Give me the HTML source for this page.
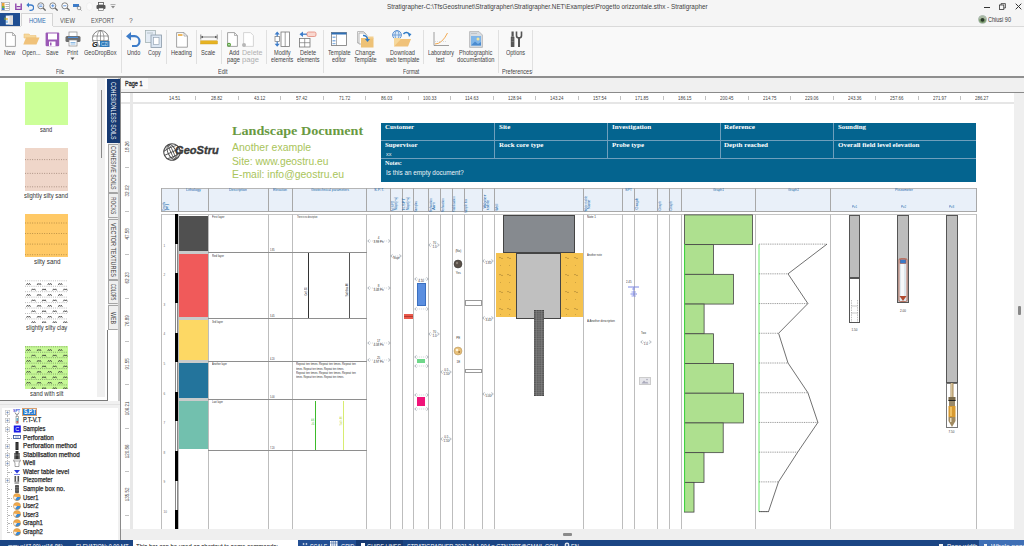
<!DOCTYPE html>
<html><head><meta charset="utf-8">
<style>
*{box-sizing:border-box;margin:0;padding:0}
html,body{width:1024px;height:546px;overflow:hidden;background:#f3f3f3;font-family:"Liberation Sans",sans-serif;color:#333}
.a{position:absolute;display:block}
.t{position:absolute;white-space:nowrap;line-height:1}
</style></head><body>
<div class="a" style="left:0;top:0;width:1024px;height:546px;overflow:hidden">
<div class="a" style="left:0.00px;top:0.00px;width:1024.00px;height:13.00px;background:#f5f5f5;"></div>
<div class="t" style="left:386.90px;top:2.81px;font-size:7.2px;color:#404040;font-family:'Liberation Sans',sans-serif;transform:scaleX(0.8798);transform-origin:0 0;">Stratigrapher-C:\TfsGeostrunet\Stratigrapher\Stratigrapher.NET\Examples\Progetto orizzontale.sthx - Stratigrapher</div>
<svg class="a" style="left:1px;top:2px;" width="9" height="9" viewBox="0 0 9 9"><rect x="0.5" y="0.5" width="8" height="8" fill="#fff" stroke="#999" stroke-width="0.6"/><rect x="1" y="1" width="2.5" height="7" fill="#e8a33b"/><rect x="1" y="4" width="2.5" height="2" fill="#6ab04c"/><rect x="1" y="6" width="2.5" height="2" fill="#3b7dd8"/><line x1="4.5" y1="2.5" x2="8" y2="2.5" stroke="#888" stroke-width="0.6"/><line x1="4.5" y1="4.5" x2="8" y2="4.5" stroke="#888" stroke-width="0.6"/><line x1="4.5" y1="6.5" x2="8" y2="6.5" stroke="#888" stroke-width="0.6"/></svg>
<svg class="a" style="left:15px;top:3px;" width="7" height="7" viewBox="0 0 7 7"><path d="M0.8 0.5 V6.5 H6.2 V0.5" fill="none" stroke="#8e44ad" stroke-width="1.4"/><rect x="1.5" y="3" width="4" height="1.2" fill="#8e44ad"/></svg>
<svg class="a" style="left:26px;top:2px;" width="8" height="9" viewBox="0 0 8 9"><path d="M2 3 H5 A2.6 2.6 0 0 1 5 8.3 H3.5" fill="none" stroke="#3d7cc9" stroke-width="1.3"/><path d="M0.3 3 L3 0.6 V5.4 Z" fill="#3d7cc9"/></svg>
<svg class="a" style="left:37px;top:2px;" width="9" height="9" viewBox="0 0 9 9"><circle cx="3.8" cy="3.8" r="3" fill="#fff" stroke="#777" stroke-width="0.9"/><line x1="6" y1="6" x2="8.6" y2="8.6" stroke="#666" stroke-width="1.3"/><line x1="2.2" y1="3" x2="5.4" y2="3" stroke="#3b7dd8" stroke-width="0.7"/><line x1="2.2" y1="4.6" x2="5.4" y2="4.6" stroke="#3b7dd8" stroke-width="0.7"/></svg>
<svg class="a" style="left:49px;top:2px;" width="9" height="9" viewBox="0 0 9 9"><circle cx="3.8" cy="3.8" r="3" fill="#fff" stroke="#777" stroke-width="0.9"/><line x1="6" y1="6" x2="8.6" y2="8.6" stroke="#666" stroke-width="1.3"/><line x1="2.2" y1="3.8" x2="5.4" y2="3.8" stroke="#3b7dd8" stroke-width="0.8"/><line x1="3.8" y1="2.2" x2="3.8" y2="5.4" stroke="#3b7dd8" stroke-width="0.8"/></svg>
<svg class="a" style="left:61px;top:2px;" width="9" height="9" viewBox="0 0 9 9"><circle cx="3.8" cy="3.8" r="3" fill="#fff" stroke="#777" stroke-width="0.9"/><line x1="6" y1="6" x2="8.6" y2="8.6" stroke="#666" stroke-width="1.3"/><line x1="2.2" y1="3.8" x2="5.4" y2="3.8" stroke="#3b7dd8" stroke-width="0.8"/></svg>
<svg class="a" style="left:73px;top:3px;" width="9" height="8" viewBox="0 0 9 8"><rect x="0" y="1" width="6" height="3" fill="#3d7cc9"/><circle cx="6" cy="5" r="1.8" fill="none" stroke="#777" stroke-width="0.7"/><line x1="7.2" y1="6.2" x2="8.5" y2="7.5" stroke="#777" stroke-width="0.8"/></svg>
<svg class="a" style="left:86px;top:2px;" width="7" height="9" viewBox="0 0 7 9"><ellipse cx="3.5" cy="4.5" rx="3" ry="3.8" fill="#fafafa" stroke="#e6e6e6" stroke-width="0.5"/></svg>
<svg class="a" style="left:96px;top:2px;" width="10" height="9" viewBox="0 0 10 9"><rect x="2.5" y="0.5" width="5" height="2.5" fill="#fff" stroke="#555" stroke-width="0.8"/><rect x="0.5" y="3" width="9" height="4" rx="1" fill="#555"/><rect x="2.5" y="6" width="5" height="2.5" fill="#fff" stroke="#555" stroke-width="0.6"/></svg>
<svg class="a" style="left:110px;top:4px;" width="6" height="5" viewBox="0 0 6 5"><line x1="0.5" y1="0.6" x2="5.5" y2="0.6" stroke="#888" stroke-width="0.7"/><path d="M1 2 L5 2 L3 4.5 Z" fill="#888"/></svg>
<div class="a" style="left:984.25px;top:6.60px;width:5.25px;height:0.90px;background:#333;"></div>
<svg class="a" style="left:999px;top:3px;" width="7" height="7" viewBox="0 0 7 7"><rect x="0.5" y="2" width="4.3" height="4.5" fill="none" stroke="#333" stroke-width="0.8"/><path d="M2 2 V0.6 H6.4 V5 H4.8" fill="none" stroke="#333" stroke-width="0.8"/></svg>
<svg class="a" style="left:1015px;top:3px;" width="7" height="7" viewBox="0 0 7 7"><path d="M0.7 0.7 L6.3 6.3 M6.3 0.7 L0.7 6.3" stroke="#333" stroke-width="1"/></svg>
<div class="a" style="left:0.00px;top:13.00px;width:1024.00px;height:13.00px;background:#f5f5f5;"></div>
<div class="a" style="left:0.00px;top:13.10px;width:20.00px;height:13.40px;background:#1f4e91;"></div>
<svg class="a" style="left:4px;top:15px;" width="10" height="10" viewBox="0 0 10 10"><rect x="1.8" y="0.6" width="7.2" height="9" fill="#f4f4f4"/><rect x="5.5" y="0.6" width="3.5" height="9" fill="#dcdcdc"/><rect x="0.4" y="2.5" width="1.4" height="2.5" fill="#7aa04a"/><rect x="2.3" y="3" width="1.3" height="2" fill="#f0b030"/><rect x="2.3" y="5.5" width="1.3" height="2.5" fill="#6ab0e8"/></svg>
<div class="a" style="left:20.6px;top:13.1px;width:32px;height:14px;background:#f9f9f9;border:1px solid #d4d4d4;border-bottom:none"></div>
<div class="t" style="left:28.50px;top:16.57px;font-size:7.3px;color:#2e6eb2;font-family:'Liberation Sans',sans-serif;transform:scaleX(0.7648);transform-origin:0 0;">HOME</div>
<div class="t" style="left:60.25px;top:16.57px;font-size:7.3px;color:#555;font-family:'Liberation Sans',sans-serif;transform:scaleX(0.8040);transform-origin:0 0;">VIEW</div>
<div class="t" style="left:90.60px;top:16.57px;font-size:7.3px;color:#555;font-family:'Liberation Sans',sans-serif;transform:scaleX(0.7746);transform-origin:0 0;">EXPORT</div>
<div class="t" style="left:128.75px;top:16.57px;font-size:7.3px;color:#555;font-family:'Liberation Sans',sans-serif;transform:scaleX(0.9236);transform-origin:0 0;">?</div>
<svg class="a" style="left:978px;top:15px;" width="9" height="9" viewBox="0 0 9 9"><circle cx="4.5" cy="4.5" r="4" fill="#7a9a6a"/><path d="M0.5 4.5 A4 4 0 0 1 8.5 4.5 Z" fill="#a8b8a0"/><circle cx="4.5" cy="4.8" r="1.9" fill="#2b3a2a"/><circle cx="4.5" cy="4.5" r="4" fill="none" stroke="#b8c4c8" stroke-width="0.6"/></svg>
<div class="t" style="left:988.00px;top:15.67px;font-size:7.0px;color:#333;font-family:'Liberation Sans',sans-serif;transform:scaleX(0.7881);transform-origin:0 0;">Chiusi 90</div>
<div class="a" style="left:0.00px;top:26.00px;width:1024.00px;height:50.00px;background:#f9f9f9;"></div>
<div class="a" style="left:52.50px;top:26.00px;width:971.50px;height:1.00px;background:#dadada;"></div>
<div class="a" style="left:0.00px;top:26.00px;width:20.60px;height:1.00px;background:#dadada;"></div>
<div class="a" style="left:0.00px;top:76.00px;width:1024.00px;height:2.00px;background:#8f8f8f;"></div>
<div class="a" style="left:120.90px;top:29.50px;width:1.00px;height:43.50px;background:#e0e0e0;"></div>
<div class="a" style="left:166.20px;top:29.50px;width:1.00px;height:34.50px;background:#e0e0e0;"></div>
<div class="a" style="left:196.10px;top:29.50px;width:1.00px;height:34.50px;background:#e0e0e0;"></div>
<div class="a" style="left:221.10px;top:29.50px;width:1.00px;height:34.50px;background:#e0e0e0;"></div>
<div class="a" style="left:266.00px;top:29.50px;width:1.00px;height:34.50px;background:#e0e0e0;"></div>
<div class="a" style="left:322.90px;top:29.50px;width:1.00px;height:43.50px;background:#e0e0e0;"></div>
<div class="a" style="left:422.90px;top:29.50px;width:1.00px;height:34.50px;background:#e0e0e0;"></div>
<div class="a" style="left:498.25px;top:29.50px;width:1.00px;height:43.50px;background:#e0e0e0;"></div>
<div class="a" style="left:532.30px;top:29.50px;width:1.00px;height:43.50px;background:#e0e0e0;"></div>
<div class="t" style="left:4.40px;top:48.77px;font-size:7.0px;color:#444;font-family:'Liberation Sans',sans-serif;transform:scaleX(0.7998);transform-origin:0 0;">New</div>
<div class="t" style="left:21.90px;top:48.77px;font-size:7.0px;color:#444;font-family:'Liberation Sans',sans-serif;transform:scaleX(0.8145);transform-origin:0 0;">Open...</div>
<div class="t" style="left:45.60px;top:48.77px;font-size:7.0px;color:#444;font-family:'Liberation Sans',sans-serif;transform:scaleX(0.7834);transform-origin:0 0;">Save</div>
<div class="t" style="left:66.90px;top:48.77px;font-size:7.0px;color:#444;font-family:'Liberation Sans',sans-serif;transform:scaleX(0.7573);transform-origin:0 0;">Print</div>
<div class="t" style="left:84.40px;top:48.77px;font-size:7.0px;color:#444;font-family:'Liberation Sans',sans-serif;transform:scaleX(0.8031);transform-origin:0 0;">GeoDropBox</div>
<svg class="a" style="left:70px;top:57px;" width="5" height="4" viewBox="0 0 5 4"><path d="M0.5 0.5 L4.5 0.5 L2.5 3 Z" fill="#555"/></svg>
<div class="t" style="left:55.90px;top:68.27px;font-size:7.0px;color:#444;font-family:'Liberation Sans',sans-serif;transform:scaleX(0.7181);transform-origin:0 0;">File</div>
<div class="t" style="left:127.00px;top:48.77px;font-size:7.0px;color:#444;font-family:'Liberation Sans',sans-serif;transform:scaleX(0.7947);transform-origin:0 0;">Undo</div>
<div class="t" style="left:147.70px;top:48.77px;font-size:7.0px;color:#444;font-family:'Liberation Sans',sans-serif;transform:scaleX(0.7772);transform-origin:0 0;">Copy</div>
<div class="t" style="left:170.80px;top:48.77px;font-size:7.0px;color:#444;font-family:'Liberation Sans',sans-serif;transform:scaleX(0.8015);transform-origin:0 0;">Heading</div>
<div class="t" style="left:201.20px;top:48.77px;font-size:7.0px;color:#444;font-family:'Liberation Sans',sans-serif;transform:scaleX(0.8166);transform-origin:0 0;">Scale</div>
<div class="t" style="left:228.50px;top:48.77px;font-size:7.0px;color:#444;font-family:'Liberation Sans',sans-serif;transform:scaleX(0.8189);transform-origin:0 0;">Add</div>
<div class="t" style="left:227.00px;top:55.87px;font-size:7.0px;color:#444;font-family:'Liberation Sans',sans-serif;transform:scaleX(0.8348);transform-origin:0 0;">page</div>
<div class="t" style="left:241.50px;top:48.77px;font-size:7.0px;color:#b0b0b0;font-family:'Liberation Sans',sans-serif;transform:scaleX(1.0131);transform-origin:0 0;">Delete</div>
<div class="t" style="left:242.00px;top:55.87px;font-size:7.0px;color:#b0b0b0;font-family:'Liberation Sans',sans-serif;transform:scaleX(1.0916);transform-origin:0 0;">page</div>
<div class="t" style="left:217.80px;top:68.27px;font-size:7.0px;color:#444;font-family:'Liberation Sans',sans-serif;transform:scaleX(0.7876);transform-origin:0 0;">Edit</div>
<div class="t" style="left:273.50px;top:48.77px;font-size:7.0px;color:#444;font-family:'Liberation Sans',sans-serif;transform:scaleX(0.8003);transform-origin:0 0;">Modify</div>
<div class="t" style="left:271.00px;top:55.87px;font-size:7.0px;color:#444;font-family:'Liberation Sans',sans-serif;transform:scaleX(0.7816);transform-origin:0 0;">elements</div>
<div class="t" style="left:299.80px;top:48.77px;font-size:7.0px;color:#444;font-family:'Liberation Sans',sans-serif;transform:scaleX(0.7907);transform-origin:0 0;">Delete</div>
<div class="t" style="left:296.70px;top:55.87px;font-size:7.0px;color:#444;font-family:'Liberation Sans',sans-serif;transform:scaleX(0.7921);transform-origin:0 0;">elements</div>
<div class="t" style="left:327.70px;top:48.77px;font-size:7.0px;color:#444;font-family:'Liberation Sans',sans-serif;transform:scaleX(0.7957);transform-origin:0 0;">Template</div>
<div class="t" style="left:331.90px;top:55.87px;font-size:7.0px;color:#444;font-family:'Liberation Sans',sans-serif;transform:scaleX(0.7938);transform-origin:0 0;">editor</div>
<div class="t" style="left:355.10px;top:48.77px;font-size:7.0px;color:#444;font-family:'Liberation Sans',sans-serif;transform:scaleX(0.8115);transform-origin:0 0;">Change</div>
<div class="t" style="left:354.40px;top:55.87px;font-size:7.0px;color:#444;font-family:'Liberation Sans',sans-serif;transform:scaleX(0.7957);transform-origin:0 0;">Template</div>
<div class="t" style="left:389.70px;top:48.77px;font-size:7.0px;color:#444;font-family:'Liberation Sans',sans-serif;transform:scaleX(0.8030);transform-origin:0 0;">Download</div>
<div class="t" style="left:385.50px;top:55.87px;font-size:7.0px;color:#444;font-family:'Liberation Sans',sans-serif;transform:scaleX(0.8046);transform-origin:0 0;">web template</div>
<div class="t" style="left:403.10px;top:68.27px;font-size:7.0px;color:#444;font-family:'Liberation Sans',sans-serif;transform:scaleX(0.7352);transform-origin:0 0;">Format</div>
<div class="t" style="left:427.70px;top:48.77px;font-size:7.0px;color:#444;font-family:'Liberation Sans',sans-serif;transform:scaleX(0.7784);transform-origin:0 0;">Laboratory</div>
<div class="t" style="left:436.00px;top:55.87px;font-size:7.0px;color:#444;font-family:'Liberation Sans',sans-serif;transform:scaleX(0.7445);transform-origin:0 0;">test</div>
<div class="t" style="left:458.90px;top:48.77px;font-size:7.0px;color:#444;font-family:'Liberation Sans',sans-serif;transform:scaleX(0.8072);transform-origin:0 0;">Photographic</div>
<div class="t" style="left:457.30px;top:55.87px;font-size:7.0px;color:#444;font-family:'Liberation Sans',sans-serif;transform:scaleX(0.8166);transform-origin:0 0;">documentation</div>
<div class="t" style="left:506.25px;top:48.77px;font-size:7.0px;color:#444;font-family:'Liberation Sans',sans-serif;transform:scaleX(0.7897);transform-origin:0 0;">Options</div>
<div class="t" style="left:501.60px;top:68.27px;font-size:7.0px;color:#444;font-family:'Liberation Sans',sans-serif;transform:scaleX(0.7949);transform-origin:0 0;">Preferences</div>
<svg class="a" style="left:5px;top:32px;" width="11" height="15" viewBox="0 0 11 15"><path d="M0.6 0.6 H7.5 L10.4 3.5 V14.4 H0.6 Z" fill="#fff" stroke="#999" stroke-width="0.9"/><path d="M7.5 0.6 V3.5 H10.4" fill="none" stroke="#999" stroke-width="0.7"/></svg>
<svg class="a" style="left:23px;top:33px;" width="17" height="12" viewBox="0 0 17 12"><path d="M1 1 H6 L7.5 2.5 H13 V5 H1 Z" fill="#f6d89c" stroke="#efc27a" stroke-width="0.6"/><path d="M0.3 11.5 L3 4.5 H16.5 L13.5 11.5 Z" fill="#f0c27a"/></svg>
<svg class="a" style="left:45px;top:32px;" width="15" height="15" viewBox="0 0 15 15"><rect x="0.6" y="0.6" width="13.6" height="13.6" rx="1" fill="#9b59b6"/><rect x="3" y="1.5" width="9" height="6" fill="#fff"/><rect x="4" y="9.5" width="6.5" height="4.7" fill="#fff"/><rect x="5" y="10.5" width="1.5" height="3" fill="#9b59b6"/></svg>
<svg class="a" style="left:65px;top:31px;" width="16" height="16" viewBox="0 0 16 16"><rect x="4" y="1" width="8" height="5" fill="#fff" stroke="#888" stroke-width="0.7"/><rect x="0.5" y="5" width="15" height="6" rx="1.5" fill="#6d6d6d"/><rect x="3" y="5.8" width="10" height="1.2" fill="#4f8fd8"/><rect x="4" y="9" width="8" height="6" fill="#fff" stroke="#888" stroke-width="0.7"/><line x1="5.5" y1="11.5" x2="10.5" y2="11.5" stroke="#5b9bd5" stroke-width="0.7"/><line x1="5.5" y1="13" x2="10.5" y2="13" stroke="#5b9bd5" stroke-width="0.7"/></svg>
<svg class="a" style="left:91px;top:30px;" width="19" height="18" viewBox="0 0 19 18"><circle cx="9.5" cy="8.5" r="8" fill="#fff" stroke="#666" stroke-width="0.8"/><ellipse cx="9.5" cy="8.5" rx="3.5" ry="8" fill="none" stroke="#666" stroke-width="0.6"/><line x1="1.5" y1="6" x2="17.5" y2="6" stroke="#666" stroke-width="0.6"/><line x1="1.5" y1="10.5" x2="17.5" y2="10.5" stroke="#666" stroke-width="0.6"/><line x1="9.5" y1="0.5" x2="9.5" y2="16.5" stroke="#666" stroke-width="0.6"/><rect x="9" y="11" width="9.5" height="6" fill="#2f79b9"/><text x="1" y="17.3" font-family="Liberation Sans" font-weight="700" font-style="italic" font-size="7.5" fill="#111">G</text><text x="10" y="16" font-family="Liberation Sans" font-size="4.5" fill="#cfe4f7">CZI</text></svg>
<svg class="a" style="left:126px;top:32px;" width="15" height="15" viewBox="0 0 15 15"><path d="M4 4.2 H8.5 A5 5 0 0 1 8.5 14.2 H6" fill="none" stroke="#3d7cc9" stroke-width="2.2"/><path d="M0 4.2 L5 0 V8.4 Z" fill="#3d7cc9"/></svg>
<svg class="a" style="left:145px;top:30px;" width="17" height="18" viewBox="0 0 17 18"><rect x="0.5" y="0.5" width="10" height="12" fill="#e4ecf5" stroke="#9aa" stroke-width="0.7"/><rect x="6" y="5" width="10.5" height="12.5" fill="#dbe6f2" stroke="#8a9aa8" stroke-width="0.8"/><rect x="8.5" y="7.5" width="5.5" height="7" fill="#fff" stroke="#8a9aa8" stroke-width="0.6"/><line x1="2" y1="3" x2="8" y2="3" stroke="#9aa" stroke-width="0.6"/></svg>
<svg class="a" style="left:176px;top:32px;" width="12" height="16" viewBox="0 0 12 16"><path d="M0.6 0.6 H8 L11.4 4 V15.2 H0.6 Z" fill="#fff" stroke="#999" stroke-width="0.9"/><path d="M8 0.6 V4 H11.4" fill="none" stroke="#999" stroke-width="0.7"/><rect x="2" y="2.2" width="4.5" height="1.6" fill="#eba83a"/></svg>
<svg class="a" style="left:200px;top:34px;" width="18" height="11" viewBox="0 0 18 11"><line x1="1" y1="3" x2="17" y2="3" stroke="#555" stroke-width="0.7"/><path d="M1 3 L3 1.8 V4.2 Z M17 3 L15 1.8 V4.2 Z" fill="#555"/><line x1="0.8" y1="0.5" x2="0.8" y2="5.5" stroke="#555" stroke-width="0.7"/><line x1="17.2" y1="0.5" x2="17.2" y2="5.5" stroke="#555" stroke-width="0.7"/><rect x="0.5" y="6.8" width="17" height="3.2" fill="#e6b323" stroke="#c9961a" stroke-width="0.4"/></svg>
<svg class="a" style="left:227px;top:32px;" width="14" height="16" viewBox="0 0 14 16"><path d="M0.6 0.6 H7.5 L10.4 3.5 V14.4 H0.6 Z" fill="#fff" stroke="#999" stroke-width="0.9"/><path d="M7.5 0.6 V3.5 H10.4" fill="none" stroke="#999" stroke-width="0.7"/><circle cx="2" cy="12.8" r="2" fill="#5aa03c"/><circle cx="2" cy="12.8" r="0.8" fill="#dfe"/></svg>
<svg class="a" style="left:241px;top:32px;" width="14" height="16" viewBox="0 0 14 16"><path d="M2.6 0.6 H9.5 L12.4 3.5 V14.4 H2.6 Z" fill="#fff" stroke="#d0d0d0" stroke-width="0.9"/><circle cx="3" cy="13" r="2" fill="#b7b7b7"/></svg>
<svg class="a" style="left:273px;top:31px;" width="17" height="17" viewBox="0 0 17 17"><rect x="8" y="1" width="8.4" height="14.5" fill="#fff" stroke="#777" stroke-width="0.8"/><line x1="12.2" y1="1" x2="12.2" y2="15.5" stroke="#777" stroke-width="0.7"/><rect x="2" y="5.5" width="4.5" height="5" fill="#fff" stroke="#777" stroke-width="0.7"/><path d="M4.2 0.5 L6.8 3.5 H1.6 Z M4.2 15.8 L6.8 12.8 H1.6 Z" fill="#3d7cc9"/><line x1="4.2" y1="3" x2="4.2" y2="5.5" stroke="#3d7cc9" stroke-width="1.2"/><line x1="4.2" y1="10.5" x2="4.2" y2="13" stroke="#3d7cc9" stroke-width="1.2"/></svg>
<svg class="a" style="left:299px;top:31px;" width="18" height="17" viewBox="0 0 18 17"><rect x="0.5" y="7.5" width="10.5" height="8.5" fill="#fff" stroke="#777" stroke-width="0.8"/><line x1="5.7" y1="7.5" x2="5.7" y2="16" stroke="#777" stroke-width="0.7"/><line x1="0.5" y1="11.7" x2="11" y2="11.7" stroke="#777" stroke-width="0.7"/><path d="M0.5 3.2 L4 0.5 V6 Z" fill="#3d7cc9"/><line x1="3.5" y1="3.2" x2="8" y2="3.2" stroke="#3d7cc9" stroke-width="1.3"/><rect x="8" y="1" width="9" height="4.5" rx="1.5" fill="#f9d8d0" stroke="#e07a6a" stroke-width="0.7"/></svg>
<svg class="a" style="left:331px;top:32px;" width="16" height="14" viewBox="0 0 16 14"><rect x="0.5" y="0.5" width="15" height="13" fill="#fff" stroke="#777" stroke-width="0.8"/><rect x="0.5" y="0.5" width="15" height="2" fill="#2f6fb5"/><line x1="5.5" y1="2.5" x2="5.5" y2="13.5" stroke="#777" stroke-width="0.6"/><rect x="1.5" y="4.5" width="3" height="1.5" fill="#8ab4e2"/><rect x="1.5" y="8" width="3" height="1.5" fill="#8ab4e2"/><rect x="1.5" y="11" width="3" height="1.2" fill="#8ab4e2"/></svg>
<svg class="a" style="left:357px;top:31px;" width="17" height="17" viewBox="0 0 17 17"><path d="M0.6 0.6 H6.5 L9 3 V12 H0.6 Z" fill="#fff" stroke="#999" stroke-width="0.7"/><path d="M2 2 H7.5 L10 4.5 V13 H2 Z" fill="#fff" stroke="#999" stroke-width="0.7"/><rect x="4" y="7" width="12.5" height="9.5" fill="#eec277"/><rect x="11" y="5.5" width="5.5" height="2" fill="#f3d08f"/><path d="M6 4.5 A4 4 0 0 1 10.5 8.5" fill="none" stroke="#2e7ac6" stroke-width="1.4"/><path d="M8 8 L13 8 L10.5 11 Z" fill="#2e7ac6"/></svg>
<svg class="a" style="left:392px;top:30px;" width="20" height="17" viewBox="0 0 20 17"><circle cx="5" cy="5" r="4.4" fill="#dce9f6" stroke="#3d7cc9" stroke-width="0.8"/><line x1="0.8" y1="5" x2="9.2" y2="5" stroke="#3d7cc9" stroke-width="0.6"/><ellipse cx="5" cy="5" rx="2" ry="4.4" fill="none" stroke="#3d7cc9" stroke-width="0.6"/><path d="M11.5 4 A3.5 3.5 0 0 1 17.5 4.5" fill="none" stroke="#2e7ac6" stroke-width="1.4"/><path d="M16 3 L19.5 4 L17 7 Z" fill="#2e7ac6"/><path d="M2 16.5 L5 9 H19 L16 16.5 Z" fill="#f0c27a"/><path d="M2 16.5 V8 H8 L9 9" fill="#f6d89c"/></svg>
<svg class="a" style="left:433px;top:32px;" width="16" height="15" viewBox="0 0 16 15"><line x1="1" y1="0" x2="1" y2="13.5" stroke="#888" stroke-width="0.8"/><line x1="1" y1="13.5" x2="16" y2="13.5" stroke="#888" stroke-width="0.8"/><path d="M2 12 Q 9 12 14.5 1" fill="none" stroke="#f0a040" stroke-width="0.9"/><line x1="2" y1="9.5" x2="13" y2="9.5" stroke="#bbb" stroke-width="0.5" stroke-dasharray="1,1"/></svg>
<svg class="a" style="left:469px;top:31px;" width="14" height="17" viewBox="0 0 14 17"><path d="M0.6 0.6 H10 L13.4 4 V16.4 H0.6 Z" fill="#d8dde3" stroke="#aaa" stroke-width="0.7"/><rect x="2" y="5" width="10" height="9.5" fill="#7fb5e8"/><circle cx="9" cy="8" r="1.5" fill="#f3e49a"/><path d="M2 14.5 L6 10.5 L9 13 L12 11 V14.5 Z" fill="#4a8bd0"/><line x1="2" y1="2.5" x2="8" y2="2.5" stroke="#aaa" stroke-width="0.5"/></svg>
<svg class="a" style="left:510px;top:31px;" width="13" height="17" viewBox="0 0 13 17"><rect x="1.5" y="0.5" width="2.2" height="5" fill="#555"/><rect x="0.8" y="5.5" width="3.6" height="10.5" rx="0.6" fill="#555"/><line x1="1.5" y1="8" x2="3.7" y2="8" stroke="#999" stroke-width="0.5"/><line x1="1.5" y1="10.5" x2="3.7" y2="10.5" stroke="#999" stroke-width="0.5"/><path d="M6.5 0.5 V4.5 A2.5 2.5 0 0 0 11.5 4.5 V0.5" fill="none" stroke="#555" stroke-width="1.6"/><rect x="8" y="6" width="2" height="10" fill="#555"/></svg>
<div class="a" style="left:0.00px;top:78.00px;width:108.20px;height:322.70px;background:#fff;"></div>
<div class="a" style="left:97.20px;top:78.00px;width:8.10px;height:318.70px;background:#f0f0f0;"></div>
<div class="a" style="left:100.50px;top:90.00px;width:1.30px;height:68.00px;background:#8a8a8a;"></div>
<div class="a" style="left:107.20px;top:329.50px;width:1.00px;height:71.20px;background:#7a7a7a;"></div>
<div class="a" style="left:25.00px;top:82.00px;width:43.00px;height:43.00px;background:#ccff99;"></div>
<div class="t" style="left:40.00px;top:127.41px;font-size:6.6px;color:#333;font-family:'Liberation Sans',sans-serif;transform:scaleX(0.8524);transform-origin:0 0;">sand</div>
<svg class="a" style="left:25px;top:148px;" width="43" height="43" viewBox="0 0 43 43"><rect width="43" height="43" fill="#efd6c9"/><line x1="0" y1="11.6" x2="43" y2="11.6" stroke="#8a6e60" stroke-width="0.7" stroke-dasharray="0.9,1.5"/><line x1="0" y1="25.4" x2="43" y2="25.4" stroke="#8a6e60" stroke-width="0.7" stroke-dasharray="0.9,1.5"/><line x1="0" y1="38.8" x2="43" y2="38.8" stroke="#8a6e60" stroke-width="0.7" stroke-dasharray="0.9,1.5"/></svg>
<div class="t" style="left:24.20px;top:193.41px;font-size:6.6px;color:#333;font-family:'Liberation Sans',sans-serif;transform:scaleX(0.8885);transform-origin:0 0;">slightly silty sand</div>
<svg class="a" style="left:25px;top:214px;" width="43" height="43" viewBox="0 0 43 43"><rect width="43" height="43" fill="#ffc966"/><line x1="0" y1="9" x2="43" y2="9" stroke="#9a7434" stroke-width="0.7" stroke-dasharray="0.9,1.5"/><line x1="0" y1="19.5" x2="43" y2="19.5" stroke="#9a7434" stroke-width="0.7" stroke-dasharray="0.9,1.5"/><line x1="0" y1="30.1" x2="43" y2="30.1" stroke="#9a7434" stroke-width="0.7" stroke-dasharray="0.9,1.5"/><line x1="0" y1="40.7" x2="43" y2="40.7" stroke="#9a7434" stroke-width="0.7" stroke-dasharray="0.9,1.5"/></svg>
<div class="t" style="left:34.00px;top:259.21px;font-size:6.6px;color:#333;font-family:'Liberation Sans',sans-serif;transform:scaleX(0.9632);transform-origin:0 0;">silty sand</div>
<svg class="a" style="left:25px;top:280px;" width="43" height="43" viewBox="0 0 43 43"><rect width="43" height="43" fill="#fff"/><line x1="0" y1="0.80" x2="43" y2="0.80" stroke="#9a9a9a" stroke-width="0.7" stroke-dasharray="0.9,1.25"/><path d="M1.50 5.00 l1 -1.6 l1 1.2 l1 -1.2 l1 1.6" fill="none" stroke="#333" stroke-width="0.8"/><path d="M12.10 5.00 l1 -1.6 l1 1.2 l1 -1.2 l1 1.6" fill="none" stroke="#333" stroke-width="0.8"/><path d="M22.70 5.00 l1 -1.6 l1 1.2 l1 -1.2 l1 1.6" fill="none" stroke="#333" stroke-width="0.8"/><path d="M33.30 5.00 l1 -1.6 l1 1.2 l1 -1.2 l1 1.6" fill="none" stroke="#333" stroke-width="0.8"/><line x1="0" y1="6.25" x2="43" y2="6.25" stroke="#9a9a9a" stroke-width="0.7" stroke-dasharray="0.9,1.25"/><path d="M6.50 10.45 l1 -1.6 l1 1.2 l1 -1.2 l1 1.6" fill="none" stroke="#333" stroke-width="0.8"/><path d="M17.10 10.45 l1 -1.6 l1 1.2 l1 -1.2 l1 1.6" fill="none" stroke="#333" stroke-width="0.8"/><path d="M27.70 10.45 l1 -1.6 l1 1.2 l1 -1.2 l1 1.6" fill="none" stroke="#333" stroke-width="0.8"/><path d="M38.30 10.45 l1 -1.6 l1 1.2 l1 -1.2 l1 1.6" fill="none" stroke="#333" stroke-width="0.8"/><line x1="0" y1="11.70" x2="43" y2="11.70" stroke="#9a9a9a" stroke-width="0.7" stroke-dasharray="0.9,1.25"/><path d="M1.50 15.90 l1 -1.6 l1 1.2 l1 -1.2 l1 1.6" fill="none" stroke="#333" stroke-width="0.8"/><path d="M12.10 15.90 l1 -1.6 l1 1.2 l1 -1.2 l1 1.6" fill="none" stroke="#333" stroke-width="0.8"/><path d="M22.70 15.90 l1 -1.6 l1 1.2 l1 -1.2 l1 1.6" fill="none" stroke="#333" stroke-width="0.8"/><path d="M33.30 15.90 l1 -1.6 l1 1.2 l1 -1.2 l1 1.6" fill="none" stroke="#333" stroke-width="0.8"/><line x1="0" y1="17.15" x2="43" y2="17.15" stroke="#9a9a9a" stroke-width="0.7" stroke-dasharray="0.9,1.25"/><path d="M6.50 21.35 l1 -1.6 l1 1.2 l1 -1.2 l1 1.6" fill="none" stroke="#333" stroke-width="0.8"/><path d="M17.10 21.35 l1 -1.6 l1 1.2 l1 -1.2 l1 1.6" fill="none" stroke="#333" stroke-width="0.8"/><path d="M27.70 21.35 l1 -1.6 l1 1.2 l1 -1.2 l1 1.6" fill="none" stroke="#333" stroke-width="0.8"/><path d="M38.30 21.35 l1 -1.6 l1 1.2 l1 -1.2 l1 1.6" fill="none" stroke="#333" stroke-width="0.8"/><line x1="0" y1="22.60" x2="43" y2="22.60" stroke="#9a9a9a" stroke-width="0.7" stroke-dasharray="0.9,1.25"/><path d="M1.50 26.80 l1 -1.6 l1 1.2 l1 -1.2 l1 1.6" fill="none" stroke="#333" stroke-width="0.8"/><path d="M12.10 26.80 l1 -1.6 l1 1.2 l1 -1.2 l1 1.6" fill="none" stroke="#333" stroke-width="0.8"/><path d="M22.70 26.80 l1 -1.6 l1 1.2 l1 -1.2 l1 1.6" fill="none" stroke="#333" stroke-width="0.8"/><path d="M33.30 26.80 l1 -1.6 l1 1.2 l1 -1.2 l1 1.6" fill="none" stroke="#333" stroke-width="0.8"/><line x1="0" y1="28.05" x2="43" y2="28.05" stroke="#9a9a9a" stroke-width="0.7" stroke-dasharray="0.9,1.25"/><path d="M6.50 32.25 l1 -1.6 l1 1.2 l1 -1.2 l1 1.6" fill="none" stroke="#333" stroke-width="0.8"/><path d="M17.10 32.25 l1 -1.6 l1 1.2 l1 -1.2 l1 1.6" fill="none" stroke="#333" stroke-width="0.8"/><path d="M27.70 32.25 l1 -1.6 l1 1.2 l1 -1.2 l1 1.6" fill="none" stroke="#333" stroke-width="0.8"/><path d="M38.30 32.25 l1 -1.6 l1 1.2 l1 -1.2 l1 1.6" fill="none" stroke="#333" stroke-width="0.8"/><line x1="0" y1="33.50" x2="43" y2="33.50" stroke="#9a9a9a" stroke-width="0.7" stroke-dasharray="0.9,1.25"/><path d="M1.50 37.70 l1 -1.6 l1 1.2 l1 -1.2 l1 1.6" fill="none" stroke="#333" stroke-width="0.8"/><path d="M12.10 37.70 l1 -1.6 l1 1.2 l1 -1.2 l1 1.6" fill="none" stroke="#333" stroke-width="0.8"/><path d="M22.70 37.70 l1 -1.6 l1 1.2 l1 -1.2 l1 1.6" fill="none" stroke="#333" stroke-width="0.8"/><path d="M33.30 37.70 l1 -1.6 l1 1.2 l1 -1.2 l1 1.6" fill="none" stroke="#333" stroke-width="0.8"/><line x1="0" y1="38.95" x2="43" y2="38.95" stroke="#9a9a9a" stroke-width="0.7" stroke-dasharray="0.9,1.25"/><path d="M6.50 43.15 l1 -1.6 l1 1.2 l1 -1.2 l1 1.6" fill="none" stroke="#333" stroke-width="0.8"/><path d="M17.10 43.15 l1 -1.6 l1 1.2 l1 -1.2 l1 1.6" fill="none" stroke="#333" stroke-width="0.8"/><path d="M27.70 43.15 l1 -1.6 l1 1.2 l1 -1.2 l1 1.6" fill="none" stroke="#333" stroke-width="0.8"/><path d="M38.30 43.15 l1 -1.6 l1 1.2 l1 -1.2 l1 1.6" fill="none" stroke="#333" stroke-width="0.8"/></svg>
<div class="t" style="left:25.50px;top:325.41px;font-size:6.6px;color:#333;font-family:'Liberation Sans',sans-serif;transform:scaleX(0.8798);transform-origin:0 0;">slightly silty clay</div>
<svg class="a" style="left:25px;top:346px;" width="43" height="43" viewBox="0 0 43 43"><rect width="43" height="43" fill="#c6f896"/><line x1="0" y1="0.80" x2="43" y2="0.80" stroke="#5a7a4a" stroke-width="0.7" stroke-dasharray="0.9,1.25"/><path d="M1.50 5.00 l1 -1.6 l1 1.2 l1 -1.2 l1 1.6" fill="none" stroke="#333" stroke-width="0.8"/><path d="M12.10 5.00 l1 -1.6 l1 1.2 l1 -1.2 l1 1.6" fill="none" stroke="#333" stroke-width="0.8"/><path d="M22.70 5.00 l1 -1.6 l1 1.2 l1 -1.2 l1 1.6" fill="none" stroke="#333" stroke-width="0.8"/><path d="M33.30 5.00 l1 -1.6 l1 1.2 l1 -1.2 l1 1.6" fill="none" stroke="#333" stroke-width="0.8"/><line x1="0" y1="6.25" x2="43" y2="6.25" stroke="#5a7a4a" stroke-width="0.7" stroke-dasharray="0.9,1.25"/><path d="M6.50 10.45 l1 -1.6 l1 1.2 l1 -1.2 l1 1.6" fill="none" stroke="#333" stroke-width="0.8"/><path d="M17.10 10.45 l1 -1.6 l1 1.2 l1 -1.2 l1 1.6" fill="none" stroke="#333" stroke-width="0.8"/><path d="M27.70 10.45 l1 -1.6 l1 1.2 l1 -1.2 l1 1.6" fill="none" stroke="#333" stroke-width="0.8"/><path d="M38.30 10.45 l1 -1.6 l1 1.2 l1 -1.2 l1 1.6" fill="none" stroke="#333" stroke-width="0.8"/><line x1="0" y1="11.70" x2="43" y2="11.70" stroke="#5a7a4a" stroke-width="0.7" stroke-dasharray="0.9,1.25"/><path d="M1.50 15.90 l1 -1.6 l1 1.2 l1 -1.2 l1 1.6" fill="none" stroke="#333" stroke-width="0.8"/><path d="M12.10 15.90 l1 -1.6 l1 1.2 l1 -1.2 l1 1.6" fill="none" stroke="#333" stroke-width="0.8"/><path d="M22.70 15.90 l1 -1.6 l1 1.2 l1 -1.2 l1 1.6" fill="none" stroke="#333" stroke-width="0.8"/><path d="M33.30 15.90 l1 -1.6 l1 1.2 l1 -1.2 l1 1.6" fill="none" stroke="#333" stroke-width="0.8"/><line x1="0" y1="17.15" x2="43" y2="17.15" stroke="#5a7a4a" stroke-width="0.7" stroke-dasharray="0.9,1.25"/><path d="M6.50 21.35 l1 -1.6 l1 1.2 l1 -1.2 l1 1.6" fill="none" stroke="#333" stroke-width="0.8"/><path d="M17.10 21.35 l1 -1.6 l1 1.2 l1 -1.2 l1 1.6" fill="none" stroke="#333" stroke-width="0.8"/><path d="M27.70 21.35 l1 -1.6 l1 1.2 l1 -1.2 l1 1.6" fill="none" stroke="#333" stroke-width="0.8"/><path d="M38.30 21.35 l1 -1.6 l1 1.2 l1 -1.2 l1 1.6" fill="none" stroke="#333" stroke-width="0.8"/><line x1="0" y1="22.60" x2="43" y2="22.60" stroke="#5a7a4a" stroke-width="0.7" stroke-dasharray="0.9,1.25"/><path d="M1.50 26.80 l1 -1.6 l1 1.2 l1 -1.2 l1 1.6" fill="none" stroke="#333" stroke-width="0.8"/><path d="M12.10 26.80 l1 -1.6 l1 1.2 l1 -1.2 l1 1.6" fill="none" stroke="#333" stroke-width="0.8"/><path d="M22.70 26.80 l1 -1.6 l1 1.2 l1 -1.2 l1 1.6" fill="none" stroke="#333" stroke-width="0.8"/><path d="M33.30 26.80 l1 -1.6 l1 1.2 l1 -1.2 l1 1.6" fill="none" stroke="#333" stroke-width="0.8"/><line x1="0" y1="28.05" x2="43" y2="28.05" stroke="#5a7a4a" stroke-width="0.7" stroke-dasharray="0.9,1.25"/><path d="M6.50 32.25 l1 -1.6 l1 1.2 l1 -1.2 l1 1.6" fill="none" stroke="#333" stroke-width="0.8"/><path d="M17.10 32.25 l1 -1.6 l1 1.2 l1 -1.2 l1 1.6" fill="none" stroke="#333" stroke-width="0.8"/><path d="M27.70 32.25 l1 -1.6 l1 1.2 l1 -1.2 l1 1.6" fill="none" stroke="#333" stroke-width="0.8"/><path d="M38.30 32.25 l1 -1.6 l1 1.2 l1 -1.2 l1 1.6" fill="none" stroke="#333" stroke-width="0.8"/><line x1="0" y1="33.50" x2="43" y2="33.50" stroke="#5a7a4a" stroke-width="0.7" stroke-dasharray="0.9,1.25"/><path d="M1.50 37.70 l1 -1.6 l1 1.2 l1 -1.2 l1 1.6" fill="none" stroke="#333" stroke-width="0.8"/><path d="M12.10 37.70 l1 -1.6 l1 1.2 l1 -1.2 l1 1.6" fill="none" stroke="#333" stroke-width="0.8"/><path d="M22.70 37.70 l1 -1.6 l1 1.2 l1 -1.2 l1 1.6" fill="none" stroke="#333" stroke-width="0.8"/><path d="M33.30 37.70 l1 -1.6 l1 1.2 l1 -1.2 l1 1.6" fill="none" stroke="#333" stroke-width="0.8"/><line x1="0" y1="38.95" x2="43" y2="38.95" stroke="#5a7a4a" stroke-width="0.7" stroke-dasharray="0.9,1.25"/><path d="M6.50 43.15 l1 -1.6 l1 1.2 l1 -1.2 l1 1.6" fill="none" stroke="#333" stroke-width="0.8"/><path d="M17.10 43.15 l1 -1.6 l1 1.2 l1 -1.2 l1 1.6" fill="none" stroke="#333" stroke-width="0.8"/><path d="M27.70 43.15 l1 -1.6 l1 1.2 l1 -1.2 l1 1.6" fill="none" stroke="#333" stroke-width="0.8"/><path d="M38.30 43.15 l1 -1.6 l1 1.2 l1 -1.2 l1 1.6" fill="none" stroke="#333" stroke-width="0.8"/></svg>
<div class="t" style="left:29.50px;top:391.01px;font-size:6.6px;color:#333;font-family:'Liberation Sans',sans-serif;transform:scaleX(0.8866);transform-origin:0 0;">sand with silt</div>
<div class="a" style="left:0.00px;top:399.70px;width:108.20px;height:1.00px;background:#7a7a7a;"></div>
<div class="a" style="left:0.00px;top:400.70px;width:121.00px;height:7.00px;background:#f0f0f0;"></div>
<div class="a" style="left:0.00px;top:404.00px;width:120.00px;height:0.80px;background:#e2e2e2;"></div>
<div class="a" style="left:0.00px;top:407.70px;width:121.00px;height:132.30px;background:#f0f0f0;"></div>
<div class="a" style="left:1.80px;top:407.70px;width:116.30px;height:132.30px;background:#fff;"></div>
<div class="a" style="left:120.00px;top:400.00px;width:1.00px;height:140.00px;background:#8a8a8a;"></div>
<div class="a" style="left:7.2px;top:415px;width:0;height:118px;border-left:0.7px dotted #b5b5b5"></div>
<svg class="a" style="left:5px;top:409.70px" width="5" height="5" viewBox="0 0 5 5"><rect x="0.3" y="0.3" width="4.4" height="4.4" fill="#fbfbfb" stroke="#bdbdbd" stroke-width="0.6"/><path d="M1.3 2.5 H3.7 M2.5 1.3 V3.7" stroke="#5a78b0" stroke-width="0.6"/></svg>
<div class="a" style="left:22.10px;top:407.90px;width:14.80px;height:8.60px;background:#1f78d1;border:0.5px solid #d8a070"></div>
<div class="t" style="left:23.60px;top:408.58px;font-size:6.4px;color:#fff;font-family:'Liberation Sans',sans-serif;font-weight:700;transform:scaleX(0.7774);transform-origin:0 0;">S.P.T</div>
<svg class="a" style="left:5px;top:418.26px" width="5" height="5" viewBox="0 0 5 5"><rect x="0.3" y="0.3" width="4.4" height="4.4" fill="#fbfbfb" stroke="#bdbdbd" stroke-width="0.6"/><path d="M1.3 2.5 H3.7 M2.5 1.3 V3.7" stroke="#5a78b0" stroke-width="0.6"/></svg>
<div class="t" style="left:23.10px;top:417.47px;font-size:6.6px;color:#222;font-family:'Liberation Sans',sans-serif;transform:scaleX(0.8703);transform-origin:0 0;-webkit-text-stroke:0.25px #333;">P.T-V.T</div>
<svg class="a" style="left:5px;top:426.82px" width="5" height="5" viewBox="0 0 5 5"><rect x="0.3" y="0.3" width="4.4" height="4.4" fill="#fbfbfb" stroke="#bdbdbd" stroke-width="0.6"/><path d="M1.3 2.5 H3.7 M2.5 1.3 V3.7" stroke="#5a78b0" stroke-width="0.6"/></svg>
<div class="t" style="left:23.10px;top:426.03px;font-size:6.6px;color:#222;font-family:'Liberation Sans',sans-serif;transform:scaleX(0.8723);transform-origin:0 0;-webkit-text-stroke:0.25px #333;">Samples</div>
<div class="a" style="left:7.5px;top:437.88px;width:4px;height:0;border-top:0.7px dotted #b5b5b5"></div>
<div class="t" style="left:23.10px;top:434.59px;font-size:6.6px;color:#222;font-family:'Liberation Sans',sans-serif;transform:scaleX(0.9571);transform-origin:0 0;-webkit-text-stroke:0.25px #333;">Perforation</div>
<svg class="a" style="left:5px;top:443.94px" width="5" height="5" viewBox="0 0 5 5"><rect x="0.3" y="0.3" width="4.4" height="4.4" fill="#fbfbfb" stroke="#bdbdbd" stroke-width="0.6"/><path d="M1.3 2.5 H3.7 M2.5 1.3 V3.7" stroke="#5a78b0" stroke-width="0.6"/></svg>
<div class="t" style="left:23.10px;top:443.15px;font-size:6.6px;color:#222;font-family:'Liberation Sans',sans-serif;transform:scaleX(0.9584);transform-origin:0 0;-webkit-text-stroke:0.25px #333;">Perforation method</div>
<svg class="a" style="left:5px;top:452.50px" width="5" height="5" viewBox="0 0 5 5"><rect x="0.3" y="0.3" width="4.4" height="4.4" fill="#fbfbfb" stroke="#bdbdbd" stroke-width="0.6"/><path d="M1.3 2.5 H3.7 M2.5 1.3 V3.7" stroke="#5a78b0" stroke-width="0.6"/></svg>
<div class="t" style="left:23.10px;top:451.71px;font-size:6.6px;color:#222;font-family:'Liberation Sans',sans-serif;transform:scaleX(0.9573);transform-origin:0 0;-webkit-text-stroke:0.25px #333;">Stabilisation method</div>
<svg class="a" style="left:5px;top:461.06px" width="5" height="5" viewBox="0 0 5 5"><rect x="0.3" y="0.3" width="4.4" height="4.4" fill="#fbfbfb" stroke="#bdbdbd" stroke-width="0.6"/><path d="M1.3 2.5 H3.7 M2.5 1.3 V3.7" stroke="#5a78b0" stroke-width="0.6"/></svg>
<div class="t" style="left:23.10px;top:460.27px;font-size:6.6px;color:#222;font-family:'Liberation Sans',sans-serif;transform:scaleX(0.9675);transform-origin:0 0;-webkit-text-stroke:0.25px #333;">Well</div>
<div class="a" style="left:7.5px;top:472.12px;width:4px;height:0;border-top:0.7px dotted #b5b5b5"></div>
<div class="t" style="left:23.10px;top:468.83px;font-size:6.6px;color:#222;font-family:'Liberation Sans',sans-serif;transform:scaleX(0.9425);transform-origin:0 0;-webkit-text-stroke:0.25px #333;">Water table level</div>
<svg class="a" style="left:5px;top:478.18px" width="5" height="5" viewBox="0 0 5 5"><rect x="0.3" y="0.3" width="4.4" height="4.4" fill="#fbfbfb" stroke="#bdbdbd" stroke-width="0.6"/><path d="M1.3 2.5 H3.7 M2.5 1.3 V3.7" stroke="#5a78b0" stroke-width="0.6"/></svg>
<div class="t" style="left:23.10px;top:477.39px;font-size:6.6px;color:#222;font-family:'Liberation Sans',sans-serif;transform:scaleX(0.8867);transform-origin:0 0;-webkit-text-stroke:0.25px #333;">Piezometer</div>
<div class="a" style="left:7.5px;top:489.24px;width:4px;height:0;border-top:0.7px dotted #b5b5b5"></div>
<div class="t" style="left:23.10px;top:485.95px;font-size:6.6px;color:#222;font-family:'Liberation Sans',sans-serif;transform:scaleX(0.9136);transform-origin:0 0;-webkit-text-stroke:0.25px #333;">Sample box no.</div>
<div class="a" style="left:7.5px;top:497.80px;width:4px;height:0;border-top:0.7px dotted #b5b5b5"></div>
<div class="t" style="left:23.10px;top:494.51px;font-size:6.6px;color:#222;font-family:'Liberation Sans',sans-serif;transform:scaleX(0.8804);transform-origin:0 0;-webkit-text-stroke:0.25px #333;">User1</div>
<div class="a" style="left:7.5px;top:506.36px;width:4px;height:0;border-top:0.7px dotted #b5b5b5"></div>
<div class="t" style="left:23.10px;top:503.07px;font-size:6.6px;color:#222;font-family:'Liberation Sans',sans-serif;transform:scaleX(0.8804);transform-origin:0 0;-webkit-text-stroke:0.25px #333;">User2</div>
<div class="a" style="left:7.5px;top:514.92px;width:4px;height:0;border-top:0.7px dotted #b5b5b5"></div>
<div class="t" style="left:23.10px;top:511.63px;font-size:6.6px;color:#222;font-family:'Liberation Sans',sans-serif;transform:scaleX(0.8804);transform-origin:0 0;-webkit-text-stroke:0.25px #333;">User3</div>
<div class="a" style="left:7.5px;top:523.48px;width:4px;height:0;border-top:0.7px dotted #b5b5b5"></div>
<div class="t" style="left:23.10px;top:520.19px;font-size:6.6px;color:#222;font-family:'Liberation Sans',sans-serif;transform:scaleX(0.8994);transform-origin:0 0;-webkit-text-stroke:0.25px #333;">Graph1</div>
<div class="a" style="left:7.5px;top:532.04px;width:4px;height:0;border-top:0.7px dotted #b5b5b5"></div>
<div class="t" style="left:23.10px;top:528.75px;font-size:6.6px;color:#222;font-family:'Liberation Sans',sans-serif;transform:scaleX(0.8994);transform-origin:0 0;-webkit-text-stroke:0.25px #333;">Graph2</div>
<svg class="a" style="left:13px;top:408px;" width="8" height="8" viewBox="0 0 8 8"><text x="0" y="3.5" font-size="3.6" font-family="Liberation Sans" font-weight="700" fill="#3b4bd8">SPT</text><path d="M2 4.5 L4 7.5 L6 4.5" fill="none" stroke="#333" stroke-width="0.6"/></svg>
<svg class="a" style="left:13px;top:416px;" width="8" height="8" viewBox="0 0 8 8"><rect x="3" y="0.5" width="2.4" height="7" fill="#fff" stroke="#666" stroke-width="0.5"/><rect x="3.6" y="2" width="1.2" height="4" fill="#3aa0c0"/><rect x="3.6" y="5" width="1.2" height="2" fill="#d04040"/></svg>
<svg class="a" style="left:13px;top:425px;" width="8" height="8" viewBox="0 0 8 8"><rect x="0.8" y="0.5" width="7" height="7" fill="#1a1ae6"/><text x="2.2" y="6.2" font-size="5.5" font-family="Liberation Sans" fill="#fff">C</text></svg>
<svg class="a" style="left:13px;top:433px;" width="8" height="8" viewBox="0 0 8 8"><rect x="0.5" y="2.5" width="7" height="3" fill="#fff" stroke="#2a4a9a" stroke-width="0.8"/><line x1="3" y1="2.5" x2="3" y2="5.5" stroke="#2a4a9a" stroke-width="0.5"/><line x1="5" y1="2.5" x2="5" y2="5.5" stroke="#2a4a9a" stroke-width="0.5"/></svg>
<svg class="a" style="left:13px;top:442px;" width="8" height="8" viewBox="0 0 8 8"><rect x="2.5" y="0" width="3" height="8" fill="#222"/><line x1="2.5" y1="2" x2="5.5" y2="2" stroke="#888" stroke-width="0.4"/><line x1="2.5" y1="4" x2="5.5" y2="4" stroke="#888" stroke-width="0.4"/><line x1="2.5" y1="6" x2="5.5" y2="6" stroke="#888" stroke-width="0.4"/></svg>
<svg class="a" style="left:13px;top:451px;" width="8" height="8" viewBox="0 0 8 8"><rect x="1" y="2" width="6" height="6" fill="#777"/><rect x="2.5" y="0" width="3" height="8" fill="#333"/><line x1="1" y1="4" x2="7" y2="4" stroke="#ccc" stroke-width="0.4"/></svg>
<svg class="a" style="left:13px;top:459px;" width="8" height="8" viewBox="0 0 8 8"><path d="M0.5 1 H7.5 L6 4 V7.5 H2 V4 Z" fill="#fff" stroke="#666" stroke-width="0.6"/><line x1="0.5" y1="2.5" x2="7.5" y2="2.5" stroke="#888" stroke-width="0.4"/></svg>
<svg class="a" style="left:13px;top:468px;" width="8" height="8" viewBox="0 0 8 8"><path d="M1 2 H7 L4 5.5 Z" fill="#2a3ad8"/><line x1="1" y1="6.5" x2="7" y2="6.5" stroke="#2a3ad8" stroke-width="0.6"/></svg>
<svg class="a" style="left:13px;top:476px;" width="8" height="8" viewBox="0 0 8 8"><rect x="1.5" y="0" width="1.6" height="6" fill="#555"/><rect x="4.5" y="0" width="1.6" height="6" fill="#555"/><rect x="1.5" y="5.5" width="4.6" height="2.5" fill="#aaa"/></svg>
<svg class="a" style="left:13px;top:485px;" width="8" height="8" viewBox="0 0 8 8"><rect x="2" y="0" width="4" height="8" rx="0.8" fill="#555"/><line x1="2" y1="2.5" x2="6" y2="2.5" stroke="#999" stroke-width="0.4"/><line x1="2" y1="5" x2="6" y2="5" stroke="#999" stroke-width="0.4"/></svg>
<svg class="a" style="left:13px;top:493px;" width="8" height="8" viewBox="0 0 8 8"><circle cx="4" cy="4" r="3.6" fill="#f0a84a"/><path d="M4 4 L7.6 4 A3.6 3.6 0 0 1 2 7 Z" fill="#3a8ad8"/><path d="M4 4 L2 7 A3.6 3.6 0 0 1 0.4 3.5 Z" fill="#eee"/><circle cx="4" cy="4" r="3.6" fill="none" stroke="#c88a3a" stroke-width="0.4"/></svg>
<svg class="a" style="left:13px;top:502px;" width="8" height="8" viewBox="0 0 8 8"><circle cx="4" cy="4" r="3.6" fill="#f0a84a"/><path d="M4 4 L7.6 4 A3.6 3.6 0 0 1 2 7 Z" fill="#3a8ad8"/><path d="M4 4 L2 7 A3.6 3.6 0 0 1 0.4 3.5 Z" fill="#eee"/><circle cx="4" cy="4" r="3.6" fill="none" stroke="#c88a3a" stroke-width="0.4"/></svg>
<svg class="a" style="left:13px;top:510px;" width="8" height="8" viewBox="0 0 8 8"><circle cx="4" cy="4" r="3.6" fill="#f0a84a"/><path d="M4 4 L7.6 4 A3.6 3.6 0 0 1 2 7 Z" fill="#3a8ad8"/><path d="M4 4 L2 7 A3.6 3.6 0 0 1 0.4 3.5 Z" fill="#eee"/><circle cx="4" cy="4" r="3.6" fill="none" stroke="#c88a3a" stroke-width="0.4"/></svg>
<svg class="a" style="left:13px;top:519px;" width="8" height="8" viewBox="0 0 8 8"><circle cx="4" cy="4" r="3.6" fill="#f0a84a"/><path d="M4 4 L7.6 4 A3.6 3.6 0 0 1 2 7 Z" fill="#3a8ad8"/><path d="M4 4 L2 7 A3.6 3.6 0 0 1 0.4 3.5 Z" fill="#eee"/><circle cx="4" cy="4" r="3.6" fill="none" stroke="#c88a3a" stroke-width="0.4"/></svg>
<svg class="a" style="left:13px;top:528px;" width="8" height="8" viewBox="0 0 8 8"><circle cx="4" cy="4" r="3.6" fill="#f0a84a"/><path d="M4 4 L7.6 4 A3.6 3.6 0 0 1 2 7 Z" fill="#3a8ad8"/><path d="M4 4 L2 7 A3.6 3.6 0 0 1 0.4 3.5 Z" fill="#eee"/><circle cx="4" cy="4" r="3.6" fill="none" stroke="#c88a3a" stroke-width="0.4"/></svg>
<div class="a" style="left:108.20px;top:78.00px;width:12.80px;height:322.70px;background:#f0f0f0;"></div>
<div class="a" style="left:118.30px;top:78.00px;width:1.70px;height:322.70px;background:#c8c8c8;"></div>
<div class="a" style="left:120.00px;top:78.00px;width:1.00px;height:322.70px;background:#8a8a8a;"></div>
<div class="a" style="left:108.20px;top:329.50px;width:10.10px;height:71.20px;background:#fff;"></div>
<div class="a" style="left:107.00px;top:78.70px;width:12.50px;height:64.30px;background:#173a72;"></div>
<div class="t" style="left:109.3px;top:81.70px;font-size:7.4px;color:#f4f6fa;writing-mode:vertical-rl;transform:scaleY(0.6991);transform-origin:0 0;line-height:7.6px">COHESIONLESS SOILS</div>
<div class="a" style="left:107.50px;top:143.50px;width:10.80px;height:49.00px;background:#efefef;border:0.7px solid #a5a5a5;border-right:none;border-bottom-right-radius:1px"></div>
<div class="t" style="left:109.3px;top:146.30px;font-size:7.4px;color:#444;writing-mode:vertical-rl;transform:scaleY(0.7021);transform-origin:0 0;line-height:7.6px">COHESIVE SOILS</div>
<div class="a" style="left:107.50px;top:193.00px;width:10.80px;height:25.00px;background:#efefef;border:0.7px solid #a5a5a5;border-right:none;border-bottom-right-radius:1px"></div>
<div class="t" style="left:109.3px;top:196.50px;font-size:7.4px;color:#444;writing-mode:vertical-rl;transform:scaleY(0.6536);transform-origin:0 0;line-height:7.6px">ROCKS</div>
<div class="a" style="left:107.50px;top:218.50px;width:10.80px;height:61.00px;background:#efefef;border:0.7px solid #a5a5a5;border-right:none;border-bottom-right-radius:1px"></div>
<div class="t" style="left:109.3px;top:222.70px;font-size:7.4px;color:#444;writing-mode:vertical-rl;transform:scaleY(0.7490);transform-origin:0 0;line-height:7.6px">VECTOR TEXTURES</div>
<div class="a" style="left:107.50px;top:280.00px;width:10.80px;height:24.00px;background:#efefef;border:0.7px solid #a5a5a5;border-right:none;border-bottom-right-radius:1px"></div>
<div class="t" style="left:109.3px;top:284.20px;font-size:7.4px;color:#444;writing-mode:vertical-rl;transform:scaleY(0.5216);transform-origin:0 0;line-height:7.6px">COLORS</div>
<div class="a" style="left:107.50px;top:304.50px;width:10.80px;height:25.00px;background:#efefef;border:0.7px solid #a5a5a5;border-right:none;border-bottom-right-radius:1px"></div>
<div class="t" style="left:109.3px;top:311.70px;font-size:7.4px;color:#444;writing-mode:vertical-rl;transform:scaleY(0.7119);transform-origin:0 0;line-height:7.6px">WEB</div>
<div class="a" style="left:121.00px;top:78.00px;width:903.00px;height:14.00px;background:#f0f0f0;"></div>
<div class="a" style="left:121.00px;top:78.00px;width:26.80px;height:10.70px;background:#fafafa;"></div>
<div class="t" style="left:124.80px;top:80.07px;font-size:7.0px;color:#222;font-family:'Liberation Sans',sans-serif;transform:scaleX(0.7888);transform-origin:0 0;-webkit-text-stroke:0.3px #333;">Page 1</div>
<div class="a" style="left:121.00px;top:92.00px;width:903.00px;height:1.00px;background:#8a8a8a;"></div>
<div class="a" style="left:121.00px;top:93.00px;width:893.00px;height:436.00px;background:#fff;"></div>
<div class="a" style="left:1014.00px;top:93.00px;width:10.00px;height:447.00px;background:#efefef;"></div>
<div class="a" style="left:1017.80px;top:305.80px;width:3.20px;height:9.20px;background:#888;border-radius:1px"></div>
<div class="a" style="left:132.00px;top:102.30px;width:882.00px;height:1.70px;background:#e6e6e6;"></div>
<div class="a" style="left:121.00px;top:102.30px;width:10.00px;height:1.70px;background:#e6e6e6;"></div>
<div class="a" style="left:130.20px;top:93.00px;width:2.40px;height:436.00px;background:#e8e8e8;"></div>
<div class="t" style="left:168.65px;top:95.54px;font-size:5.5px;color:#444;font-family:'Liberation Sans',sans-serif;transform:scaleX(0.8210);transform-origin:0 0;">14.51</div>
<div class="a" style="left:195.10px;top:96.30px;width:0.90px;height:4.00px;background:#c2c2c2;"></div>
<div class="t" style="left:211.17px;top:95.54px;font-size:5.5px;color:#444;font-family:'Liberation Sans',sans-serif;transform:scaleX(0.8210);transform-origin:0 0;">28.82</div>
<div class="a" style="left:237.62px;top:96.30px;width:0.90px;height:4.00px;background:#c2c2c2;"></div>
<div class="t" style="left:253.69px;top:95.54px;font-size:5.5px;color:#444;font-family:'Liberation Sans',sans-serif;transform:scaleX(0.8210);transform-origin:0 0;">43.12</div>
<div class="a" style="left:280.14px;top:96.30px;width:0.90px;height:4.00px;background:#c2c2c2;"></div>
<div class="t" style="left:296.21px;top:95.54px;font-size:5.5px;color:#444;font-family:'Liberation Sans',sans-serif;transform:scaleX(0.8210);transform-origin:0 0;">57.42</div>
<div class="a" style="left:322.66px;top:96.30px;width:0.90px;height:4.00px;background:#c2c2c2;"></div>
<div class="t" style="left:338.73px;top:95.54px;font-size:5.5px;color:#444;font-family:'Liberation Sans',sans-serif;transform:scaleX(0.8210);transform-origin:0 0;">71.72</div>
<div class="a" style="left:365.18px;top:96.30px;width:0.90px;height:4.00px;background:#c2c2c2;"></div>
<div class="t" style="left:381.25px;top:95.54px;font-size:5.5px;color:#444;font-family:'Liberation Sans',sans-serif;transform:scaleX(0.8210);transform-origin:0 0;">86.03</div>
<div class="a" style="left:407.70px;top:96.30px;width:0.90px;height:4.00px;background:#c2c2c2;"></div>
<div class="t" style="left:422.67px;top:95.54px;font-size:5.5px;color:#444;font-family:'Liberation Sans',sans-serif;transform:scaleX(0.8025);transform-origin:0 0;">100.33</div>
<div class="a" style="left:450.22px;top:96.30px;width:0.90px;height:4.00px;background:#c2c2c2;"></div>
<div class="t" style="left:465.19px;top:95.54px;font-size:5.5px;color:#444;font-family:'Liberation Sans',sans-serif;transform:scaleX(0.8224);transform-origin:0 0;">114.63</div>
<div class="a" style="left:492.74px;top:96.30px;width:0.90px;height:4.00px;background:#c2c2c2;"></div>
<div class="t" style="left:507.71px;top:95.54px;font-size:5.5px;color:#444;font-family:'Liberation Sans',sans-serif;transform:scaleX(0.8025);transform-origin:0 0;">128.94</div>
<div class="a" style="left:535.26px;top:96.30px;width:0.90px;height:4.00px;background:#c2c2c2;"></div>
<div class="t" style="left:550.23px;top:95.54px;font-size:5.5px;color:#444;font-family:'Liberation Sans',sans-serif;transform:scaleX(0.8025);transform-origin:0 0;">143.24</div>
<div class="a" style="left:577.78px;top:96.30px;width:0.90px;height:4.00px;background:#c2c2c2;"></div>
<div class="t" style="left:592.75px;top:95.54px;font-size:5.5px;color:#444;font-family:'Liberation Sans',sans-serif;transform:scaleX(0.8025);transform-origin:0 0;">157.54</div>
<div class="a" style="left:620.30px;top:96.30px;width:0.90px;height:4.00px;background:#c2c2c2;"></div>
<div class="t" style="left:635.27px;top:95.54px;font-size:5.5px;color:#444;font-family:'Liberation Sans',sans-serif;transform:scaleX(0.8025);transform-origin:0 0;">171.85</div>
<div class="a" style="left:662.82px;top:96.30px;width:0.90px;height:4.00px;background:#c2c2c2;"></div>
<div class="t" style="left:677.79px;top:95.54px;font-size:5.5px;color:#444;font-family:'Liberation Sans',sans-serif;transform:scaleX(0.8025);transform-origin:0 0;">186.15</div>
<div class="a" style="left:705.34px;top:96.30px;width:0.90px;height:4.00px;background:#c2c2c2;"></div>
<div class="t" style="left:720.31px;top:95.54px;font-size:5.5px;color:#444;font-family:'Liberation Sans',sans-serif;transform:scaleX(0.8025);transform-origin:0 0;">200.45</div>
<div class="a" style="left:747.86px;top:96.30px;width:0.90px;height:4.00px;background:#c2c2c2;"></div>
<div class="t" style="left:762.83px;top:95.54px;font-size:5.5px;color:#444;font-family:'Liberation Sans',sans-serif;transform:scaleX(0.8025);transform-origin:0 0;">214.75</div>
<div class="a" style="left:790.38px;top:96.30px;width:0.90px;height:4.00px;background:#c2c2c2;"></div>
<div class="t" style="left:805.35px;top:95.54px;font-size:5.5px;color:#444;font-family:'Liberation Sans',sans-serif;transform:scaleX(0.8025);transform-origin:0 0;">229.06</div>
<div class="a" style="left:832.90px;top:96.30px;width:0.90px;height:4.00px;background:#c2c2c2;"></div>
<div class="t" style="left:847.87px;top:95.54px;font-size:5.5px;color:#444;font-family:'Liberation Sans',sans-serif;transform:scaleX(0.8025);transform-origin:0 0;">243.36</div>
<div class="a" style="left:875.42px;top:96.30px;width:0.90px;height:4.00px;background:#c2c2c2;"></div>
<div class="t" style="left:890.39px;top:95.54px;font-size:5.5px;color:#444;font-family:'Liberation Sans',sans-serif;transform:scaleX(0.8025);transform-origin:0 0;">257.66</div>
<div class="a" style="left:917.94px;top:96.30px;width:0.90px;height:4.00px;background:#c2c2c2;"></div>
<div class="t" style="left:932.91px;top:95.54px;font-size:5.5px;color:#444;font-family:'Liberation Sans',sans-serif;transform:scaleX(0.8025);transform-origin:0 0;">271.97</div>
<div class="a" style="left:960.46px;top:96.30px;width:0.90px;height:4.00px;background:#c2c2c2;"></div>
<div class="t" style="left:975.43px;top:95.54px;font-size:5.5px;color:#444;font-family:'Liberation Sans',sans-serif;transform:scaleX(0.8025);transform-origin:0 0;">286.27</div>
<div class="t" style="left:125.00px;top:140.35px;font-size:5.5px;color:#444;writing-mode:vertical-rl;transform:rotate(180deg) scaleY(0.821);transform-origin:50% 50%;line-height:5.5px">18.26</div>
<div class="a" style="left:125.00px;top:167.30px;width:4.00px;height:0.90px;background:#c2c2c2;"></div>
<div class="t" style="left:125.00px;top:183.75px;font-size:5.5px;color:#444;writing-mode:vertical-rl;transform:rotate(180deg) scaleY(0.821);transform-origin:50% 50%;line-height:5.5px">32.02</div>
<div class="a" style="left:125.00px;top:210.70px;width:4.00px;height:0.90px;background:#c2c2c2;"></div>
<div class="t" style="left:125.00px;top:227.15px;font-size:5.5px;color:#444;writing-mode:vertical-rl;transform:rotate(180deg) scaleY(0.821);transform-origin:50% 50%;line-height:5.5px">47.58</div>
<div class="a" style="left:125.00px;top:254.10px;width:4.00px;height:0.90px;background:#c2c2c2;"></div>
<div class="t" style="left:125.00px;top:270.55px;font-size:5.5px;color:#444;writing-mode:vertical-rl;transform:rotate(180deg) scaleY(0.821);transform-origin:50% 50%;line-height:5.5px">62.23</div>
<div class="a" style="left:125.00px;top:297.50px;width:4.00px;height:0.90px;background:#c2c2c2;"></div>
<div class="t" style="left:125.00px;top:313.95px;font-size:5.5px;color:#444;writing-mode:vertical-rl;transform:rotate(180deg) scaleY(0.821);transform-origin:50% 50%;line-height:5.5px">76.89</div>
<div class="a" style="left:125.00px;top:340.90px;width:4.00px;height:0.90px;background:#c2c2c2;"></div>
<div class="t" style="left:125.00px;top:357.35px;font-size:5.5px;color:#444;writing-mode:vertical-rl;transform:rotate(180deg) scaleY(0.821);transform-origin:50% 50%;line-height:5.5px">91.55</div>
<div class="a" style="left:125.00px;top:384.30px;width:4.00px;height:0.90px;background:#c2c2c2;"></div>
<div class="t" style="left:125.00px;top:399.65px;font-size:5.5px;color:#444;writing-mode:vertical-rl;transform:rotate(180deg) scaleY(0.802);transform-origin:50% 50%;line-height:5.5px">106.21</div>
<div class="a" style="left:125.00px;top:427.70px;width:4.00px;height:0.90px;background:#c2c2c2;"></div>
<div class="t" style="left:125.00px;top:443.05px;font-size:5.5px;color:#444;writing-mode:vertical-rl;transform:rotate(180deg) scaleY(0.802);transform-origin:50% 50%;line-height:5.5px">120.86</div>
<div class="a" style="left:125.00px;top:471.10px;width:4.00px;height:0.90px;background:#c2c2c2;"></div>
<div class="t" style="left:125.00px;top:486.45px;font-size:5.5px;color:#444;writing-mode:vertical-rl;transform:rotate(180deg) scaleY(0.802);transform-origin:50% 50%;line-height:5.5px">135.52</div>
<div class="a" style="left:125.00px;top:514.50px;width:4.00px;height:0.90px;background:#c2c2c2;"></div>
<div class="a" style="left:121.00px;top:529.00px;width:893.00px;height:11.00px;background:#efefef;"></div>
<div class="a" style="left:563.00px;top:532.50px;width:9.00px;height:3.00px;background:#8a8a8a;border-radius:1px"></div>
<svg class="a" style="left:163px;top:143px;" width="18" height="18" viewBox="0 0 18 18"><g transform="rotate(-25 9 9)"><circle cx="9" cy="9" r="8.2" fill="#fff" stroke="#4a4a4a" stroke-width="1.1"/><ellipse cx="9" cy="9" rx="4" ry="8.2" fill="none" stroke="#4a4a4a" stroke-width="0.9"/><ellipse cx="9" cy="9" rx="1.2" ry="8.2" fill="none" stroke="#4a4a4a" stroke-width="0.8"/><path d="M1.8 5 Q9 3.2 16.2 5 M0.8 9 H17.2 M1.8 13 Q9 14.8 16.2 13" fill="none" stroke="#4a4a4a" stroke-width="0.9"/></g></svg>
<div class="t" style="left:174.50px;top:144.82px;font-size:11.2px;color:#3a3a3a;font-family:'Liberation Sans',sans-serif;font-weight:700;transform:scaleX(0.9913);transform-origin:0 0;font-style:italic;-webkit-text-stroke:0.35px #3a3a3a;">GeoStru</div>
<div class="t" style="left:231.70px;top:123.94px;font-size:13.2px;color:#6a9a42;font-family:'Liberation Serif',serif;font-weight:700;transform:scaleX(1.0753);transform-origin:0 0;">Landscape Document</div>
<div class="t" style="left:231.50px;top:141.96px;font-size:10.8px;color:#a9c45a;font-family:'Liberation Sans',sans-serif;transform:scaleX(0.9700);transform-origin:0 0;">Another example</div>
<div class="t" style="left:231.50px;top:155.66px;font-size:10.8px;color:#a9c45a;font-family:'Liberation Sans',sans-serif;transform:scaleX(0.9512);transform-origin:0 0;">Site: www.geostru.eu</div>
<div class="t" style="left:231.50px;top:168.56px;font-size:10.8px;color:#a9c45a;font-family:'Liberation Sans',sans-serif;transform:scaleX(0.9662);transform-origin:0 0;">E-mail: info@geostru.eu</div>
<div class="a" style="left:381.25px;top:122.50px;width:594.75px;height:59.30px;background:#04648f;"></div>
<div class="a" style="left:381.25px;top:139.70px;width:594.75px;height:0.80px;background:#6f9fbc;"></div>
<div class="a" style="left:381.25px;top:157.90px;width:594.75px;height:0.80px;background:#6f9fbc;"></div>
<div class="a" style="left:494.10px;top:122.50px;width:0.80px;height:35.80px;background:#6f9fbc;"></div>
<div class="a" style="left:606.90px;top:122.50px;width:0.80px;height:35.80px;background:#6f9fbc;"></div>
<div class="a" style="left:719.80px;top:122.50px;width:0.80px;height:35.80px;background:#6f9fbc;"></div>
<div class="a" style="left:833.30px;top:122.50px;width:0.80px;height:35.80px;background:#6f9fbc;"></div>
<div class="t" style="left:385.45px;top:123.67px;font-size:6.6px;color:#fff;font-family:'Liberation Serif',serif;font-weight:700;transform:scaleX(1.0409);transform-origin:0 0;">Customer</div>
<div class="t" style="left:385.45px;top:141.77px;font-size:6.6px;color:#fff;font-family:'Liberation Serif',serif;font-weight:700;transform:scaleX(1.0551);transform-origin:0 0;">Supervisor</div>
<div class="t" style="left:498.70px;top:123.67px;font-size:6.6px;color:#fff;font-family:'Liberation Serif',serif;font-weight:700;transform:scaleX(1.0629);transform-origin:0 0;">Site</div>
<div class="t" style="left:498.70px;top:141.77px;font-size:6.6px;color:#fff;font-family:'Liberation Serif',serif;font-weight:700;transform:scaleX(1.0587);transform-origin:0 0;">Rock core type</div>
<div class="t" style="left:611.50px;top:123.67px;font-size:6.6px;color:#fff;font-family:'Liberation Serif',serif;font-weight:700;transform:scaleX(1.0717);transform-origin:0 0;">Investigation</div>
<div class="t" style="left:611.50px;top:141.77px;font-size:6.6px;color:#fff;font-family:'Liberation Serif',serif;font-weight:700;transform:scaleX(1.0495);transform-origin:0 0;">Probe type</div>
<div class="t" style="left:724.40px;top:123.67px;font-size:6.6px;color:#fff;font-family:'Liberation Serif',serif;font-weight:700;transform:scaleX(1.1035);transform-origin:0 0;">Reference</div>
<div class="t" style="left:724.40px;top:141.77px;font-size:6.6px;color:#fff;font-family:'Liberation Serif',serif;font-weight:700;transform:scaleX(1.0699);transform-origin:0 0;">Depth reached</div>
<div class="t" style="left:837.90px;top:123.67px;font-size:6.6px;color:#fff;font-family:'Liberation Serif',serif;font-weight:700;transform:scaleX(1.0453);transform-origin:0 0;">Sounding</div>
<div class="t" style="left:837.90px;top:141.77px;font-size:6.6px;color:#fff;font-family:'Liberation Serif',serif;font-weight:700;transform:scaleX(1.0613);transform-origin:0 0;">Overall field level elevation</div>
<div class="t" style="left:385.50px;top:150.55px;font-size:6.2px;color:#e8f0f5;font-family:'Liberation Sans',sans-serif;transform:scaleX(0.8871);transform-origin:0 0;">xx</div>
<div class="t" style="left:385.40px;top:160.07px;font-size:6.6px;color:#fff;font-family:'Liberation Serif',serif;font-weight:700;transform:scaleX(0.9410);transform-origin:0 0;">Notes:</div>
<div class="t" style="left:385.50px;top:168.51px;font-size:7.2px;color:#eef4f8;font-family:'Liberation Sans',sans-serif;transform:scaleX(0.8859);transform-origin:0 0;">Is this an empty document?</div>
<div class="a" style="left:161.00px;top:188.00px;width:815.50px;height:23.50px;background:#e9f0f9;"></div>
<div class="a" style="left:161.00px;top:187.75px;width:815.50px;height:0.90px;background:#b5b5b5;"></div>
<div class="a" style="left:161.00px;top:210.85px;width:815.50px;height:0.90px;background:#a8a8a8;"></div>
<div class="a" style="left:160.55px;top:188.00px;width:0.90px;height:23.50px;background:#a8a8a8;"></div>
<div class="a" style="left:178.05px;top:188.00px;width:0.90px;height:23.50px;background:#a8a8a8;"></div>
<div class="a" style="left:207.85px;top:188.00px;width:0.90px;height:23.50px;background:#a8a8a8;"></div>
<div class="a" style="left:268.05px;top:188.00px;width:0.90px;height:23.50px;background:#a8a8a8;"></div>
<div class="a" style="left:291.95px;top:188.00px;width:0.90px;height:23.50px;background:#a8a8a8;"></div>
<div class="a" style="left:366.25px;top:188.00px;width:0.90px;height:23.50px;background:#a8a8a8;"></div>
<div class="a" style="left:390.05px;top:188.00px;width:0.90px;height:23.50px;background:#a8a8a8;"></div>
<div class="a" style="left:401.65px;top:188.00px;width:0.90px;height:23.50px;background:#a8a8a8;"></div>
<div class="a" style="left:413.25px;top:188.00px;width:0.90px;height:23.50px;background:#a8a8a8;"></div>
<div class="a" style="left:428.05px;top:188.00px;width:0.90px;height:23.50px;background:#a8a8a8;"></div>
<div class="a" style="left:439.95px;top:188.00px;width:0.90px;height:23.50px;background:#a8a8a8;"></div>
<div class="a" style="left:451.85px;top:188.00px;width:0.90px;height:23.50px;background:#a8a8a8;"></div>
<div class="a" style="left:463.85px;top:188.00px;width:0.90px;height:23.50px;background:#a8a8a8;"></div>
<div class="a" style="left:482.05px;top:188.00px;width:0.90px;height:23.50px;background:#a8a8a8;"></div>
<div class="a" style="left:493.95px;top:188.00px;width:0.90px;height:23.50px;background:#a8a8a8;"></div>
<div class="a" style="left:582.95px;top:188.00px;width:0.90px;height:23.50px;background:#a8a8a8;"></div>
<div class="a" style="left:621.95px;top:188.00px;width:0.90px;height:23.50px;background:#a8a8a8;"></div>
<div class="a" style="left:634.05px;top:188.00px;width:0.90px;height:23.50px;background:#a8a8a8;"></div>
<div class="a" style="left:656.95px;top:188.00px;width:0.90px;height:23.50px;background:#a8a8a8;"></div>
<div class="a" style="left:668.85px;top:188.00px;width:0.90px;height:23.50px;background:#a8a8a8;"></div>
<div class="a" style="left:681.05px;top:188.00px;width:0.90px;height:23.50px;background:#a8a8a8;"></div>
<div class="a" style="left:755.45px;top:188.00px;width:0.90px;height:23.50px;background:#a8a8a8;"></div>
<div class="a" style="left:830.35px;top:188.00px;width:0.90px;height:23.50px;background:#a8a8a8;"></div>
<div class="a" style="left:976.05px;top:188.00px;width:0.90px;height:23.50px;background:#a8a8a8;"></div>
<div class="t" style="left:185.90px;top:188.65px;font-size:3.6px;color:#2168aa;font-family:'Liberation Sans',sans-serif;transform:scaleX(1.0409);transform-origin:0 0;">Lithology</div>
<div class="t" style="left:229.40px;top:188.65px;font-size:3.6px;color:#2168aa;font-family:'Liberation Sans',sans-serif;transform:scaleX(0.9996);transform-origin:0 0;">Description</div>
<div class="t" style="left:273.40px;top:188.65px;font-size:3.6px;color:#2168aa;font-family:'Liberation Sans',sans-serif;transform:scaleX(0.9453);transform-origin:0 0;">Elevation</div>
<div class="t" style="left:310.50px;top:188.65px;font-size:3.6px;color:#2168aa;font-family:'Liberation Sans',sans-serif;transform:scaleX(0.9448);transform-origin:0 0;">Geotechnical parameters</div>
<div class="t" style="left:373.60px;top:188.65px;font-size:3.6px;color:#2168aa;font-family:'Liberation Sans',sans-serif;transform:scaleX(1.0942);transform-origin:0 0;">S.P.T.</div>
<div class="t" style="left:624.90px;top:188.65px;font-size:3.6px;color:#2168aa;font-family:'Liberation Sans',sans-serif;transform:scaleX(0.9998);transform-origin:0 0;">SPT</div>
<div class="t" style="left:713.20px;top:188.65px;font-size:3.6px;color:#2168aa;font-family:'Liberation Sans',sans-serif;transform:scaleX(0.9161);transform-origin:0 0;">Graph1</div>
<div class="t" style="left:787.80px;top:188.65px;font-size:3.6px;color:#2168aa;font-family:'Liberation Sans',sans-serif;transform:scaleX(0.9161);transform-origin:0 0;">Graph2</div>
<div class="t" style="left:894.60px;top:188.65px;font-size:3.6px;color:#2168aa;font-family:'Liberation Sans',sans-serif;transform:scaleX(0.9886);transform-origin:0 0;">Piezometer</div>
<div class="t" style="left:851.50px;top:206.46px;font-size:3.0px;color:#2168aa;font-family:'Liberation Sans',sans-serif;transform:scaleX(0.9672);transform-origin:0 0;">Pz1</div>
<div class="t" style="left:900.50px;top:206.46px;font-size:3.0px;color:#2168aa;font-family:'Liberation Sans',sans-serif;transform:scaleX(0.9672);transform-origin:0 0;">Pz2</div>
<div class="t" style="left:949.00px;top:206.46px;font-size:3.0px;color:#2168aa;font-family:'Liberation Sans',sans-serif;transform:scaleX(0.9672);transform-origin:0 0;">Pz3</div>
<div class="t" style="left:162.50px;top:201.50px;font-size:3.4px;line-height:3.4px;color:#2168aa;writing-mode:vertical-rl;transform:rotate(180deg) scaleY(0.992);transform-origin:50% 50%">Depth</div>
<div class="t" style="left:166.10px;top:204.50px;font-size:3.4px;line-height:3.4px;color:#2168aa;writing-mode:vertical-rl;transform:rotate(180deg) scaleY(1.271);transform-origin:50% 50%">[m]</div>
<div class="t" style="left:391.50px;top:200.50px;font-size:3.4px;line-height:3.4px;color:#2168aa;writing-mode:vertical-rl;transform:rotate(180deg) scaleY(0.999);transform-origin:50% 50%">N.SPT</div>
<div class="t" style="left:395.10px;top:197.50px;font-size:3.4px;line-height:3.4px;color:#2168aa;writing-mode:vertical-rl;transform:rotate(180deg) scaleY(1.110);transform-origin:50% 50%">Nspt[m]</div>
<div class="t" style="left:403.20px;top:198.50px;font-size:3.4px;line-height:3.4px;color:#2168aa;writing-mode:vertical-rl;transform:rotate(180deg) scaleY(1.198);transform-origin:50% 50%">N.SPT</div>
<div class="t" style="left:406.80px;top:197.50px;font-size:3.4px;line-height:3.4px;color:#2168aa;writing-mode:vertical-rl;transform:rotate(180deg) scaleY(1.110);transform-origin:50% 50%">Nspt[m]</div>
<div class="t" style="left:414.80px;top:199.50px;font-size:3.4px;line-height:3.4px;color:#2168aa;writing-mode:vertical-rl;transform:rotate(180deg) scaleY(0.832);transform-origin:50% 50%">Samples</div>
<div class="t" style="left:429.60px;top:196.50px;font-size:3.4px;line-height:3.4px;color:#2168aa;writing-mode:vertical-rl;transform:rotate(180deg) scaleY(0.842);transform-origin:50% 50%">Perforation</div>
<div class="t" style="left:433.20px;top:202.50px;font-size:3.4px;line-height:3.4px;color:#2168aa;writing-mode:vertical-rl;transform:rotate(180deg) scaleY(1.284);transform-origin:50% 50%">Arm</div>
<div class="t" style="left:441.50px;top:196.50px;font-size:3.4px;line-height:3.4px;color:#2168aa;writing-mode:vertical-rl;transform:rotate(180deg) scaleY(0.842);transform-origin:50% 50%">Perforation</div>
<div class="t" style="left:453.40px;top:194.50px;font-size:3.4px;line-height:3.4px;color:#2168aa;writing-mode:vertical-rl;transform:rotate(180deg) scaleY(0.873);transform-origin:50% 50%">Stabilisation</div>
<div class="t" style="left:465.40px;top:196.50px;font-size:3.4px;line-height:3.4px;color:#2168aa;writing-mode:vertical-rl;transform:rotate(180deg) scaleY(0.780);transform-origin:50% 50%">Sample box</div>
<div class="t" style="left:483.60px;top:196.50px;font-size:3.4px;line-height:3.4px;color:#2168aa;writing-mode:vertical-rl;transform:rotate(180deg) scaleY(1.566);transform-origin:50% 50%">Water</div>
<div class="t" style="left:487.20px;top:200.50px;font-size:3.4px;line-height:3.4px;color:#2168aa;writing-mode:vertical-rl;transform:rotate(180deg) scaleY(1.356);transform-origin:50% 50%">table</div>
<div class="t" style="left:495.50px;top:203.50px;font-size:3.4px;line-height:3.4px;color:#2168aa;writing-mode:vertical-rl;transform:rotate(180deg) scaleY(1.069);transform-origin:50% 50%">Well</div>
<div class="t" style="left:584.50px;top:194.50px;font-size:3.4px;line-height:3.4px;color:#2168aa;writing-mode:vertical-rl;transform:rotate(180deg) scaleY(0.927);transform-origin:50% 50%">Water table</div>
<div class="t" style="left:588.10px;top:200.50px;font-size:3.4px;line-height:3.4px;color:#2168aa;writing-mode:vertical-rl;transform:rotate(180deg) scaleY(1.392);transform-origin:50% 50%">Note</div>
<div class="t" style="left:635.60px;top:198.50px;font-size:3.4px;line-height:3.4px;color:#2168aa;writing-mode:vertical-rl;transform:rotate(180deg) scaleY(1.270);transform-origin:50% 50%">Graph</div>
<div class="t" style="left:658.50px;top:200.50px;font-size:3.4px;line-height:3.4px;color:#2168aa;writing-mode:vertical-rl;transform:rotate(180deg) scaleY(1.058);transform-origin:50% 50%">Graph</div>
<div class="t" style="left:670.40px;top:200.50px;font-size:3.4px;line-height:3.4px;color:#2168aa;writing-mode:vertical-rl;transform:rotate(180deg) scaleY(1.058);transform-origin:50% 50%">Graph</div>
<div class="a" style="left:161.00px;top:213.75px;width:815.50px;height:0.90px;background:#c4c4c4;"></div>
<div class="a" style="left:160.55px;top:214.20px;width:0.90px;height:314.80px;background:#bdbdbd;"></div>
<div class="a" style="left:178.05px;top:214.20px;width:0.90px;height:314.80px;background:#bdbdbd;"></div>
<div class="a" style="left:207.85px;top:214.20px;width:0.90px;height:314.80px;background:#bdbdbd;"></div>
<div class="a" style="left:268.05px;top:214.20px;width:0.90px;height:314.80px;background:#bdbdbd;"></div>
<div class="a" style="left:291.95px;top:214.20px;width:0.90px;height:314.80px;background:#bdbdbd;"></div>
<div class="a" style="left:366.25px;top:214.20px;width:0.90px;height:314.80px;background:#bdbdbd;"></div>
<div class="a" style="left:390.05px;top:214.20px;width:0.90px;height:314.80px;background:#bdbdbd;"></div>
<div class="a" style="left:401.65px;top:214.20px;width:0.90px;height:314.80px;background:#bdbdbd;"></div>
<div class="a" style="left:413.25px;top:214.20px;width:0.90px;height:314.80px;background:#bdbdbd;"></div>
<div class="a" style="left:428.05px;top:214.20px;width:0.90px;height:314.80px;background:#bdbdbd;"></div>
<div class="a" style="left:439.95px;top:214.20px;width:0.90px;height:314.80px;background:#bdbdbd;"></div>
<div class="a" style="left:451.85px;top:214.20px;width:0.90px;height:314.80px;background:#bdbdbd;"></div>
<div class="a" style="left:463.85px;top:214.20px;width:0.90px;height:314.80px;background:#bdbdbd;"></div>
<div class="a" style="left:482.05px;top:214.20px;width:0.90px;height:314.80px;background:#bdbdbd;"></div>
<div class="a" style="left:493.95px;top:214.20px;width:0.90px;height:314.80px;background:#bdbdbd;"></div>
<div class="a" style="left:582.95px;top:214.20px;width:0.90px;height:314.80px;background:#bdbdbd;"></div>
<div class="a" style="left:621.95px;top:214.20px;width:0.90px;height:314.80px;background:#bdbdbd;"></div>
<div class="a" style="left:634.05px;top:214.20px;width:0.90px;height:314.80px;background:#bdbdbd;"></div>
<div class="a" style="left:656.95px;top:214.20px;width:0.90px;height:314.80px;background:#bdbdbd;"></div>
<div class="a" style="left:668.85px;top:214.20px;width:0.90px;height:314.80px;background:#bdbdbd;"></div>
<div class="a" style="left:681.05px;top:214.20px;width:0.90px;height:314.80px;background:#bdbdbd;"></div>
<div class="a" style="left:755.45px;top:214.20px;width:0.90px;height:314.80px;background:#bdbdbd;"></div>
<div class="a" style="left:830.35px;top:214.20px;width:0.90px;height:314.80px;background:#bdbdbd;"></div>
<div class="a" style="left:976.05px;top:214.20px;width:0.90px;height:314.80px;background:#bdbdbd;"></div>
<div class="a" style="left:175.00px;top:214.20px;width:3.00px;height:314.80px;background:#fff;border:0.6px solid #888"></div>
<div class="a" style="left:175.00px;top:214.20px;width:3.00px;height:29.60px;background:#000;"></div>
<div class="a" style="left:175.00px;top:273.40px;width:3.00px;height:29.60px;background:#000;"></div>
<div class="a" style="left:175.00px;top:332.60px;width:3.00px;height:29.60px;background:#000;"></div>
<div class="a" style="left:175.00px;top:391.80px;width:3.00px;height:29.60px;background:#000;"></div>
<div class="a" style="left:175.00px;top:451.00px;width:3.00px;height:29.60px;background:#000;"></div>
<div class="a" style="left:175.00px;top:510.20px;width:3.00px;height:18.80px;background:#000;"></div>
<div class="t" style="left:163.50px;top:244.56px;font-size:3.0px;color:#666;font-family:'Liberation Sans',sans-serif;">1</div>
<div class="t" style="left:163.50px;top:274.16px;font-size:3.0px;color:#666;font-family:'Liberation Sans',sans-serif;">2</div>
<div class="t" style="left:163.50px;top:303.76px;font-size:3.0px;color:#666;font-family:'Liberation Sans',sans-serif;">3</div>
<div class="t" style="left:163.50px;top:333.36px;font-size:3.0px;color:#666;font-family:'Liberation Sans',sans-serif;">4</div>
<div class="t" style="left:163.50px;top:362.96px;font-size:3.0px;color:#666;font-family:'Liberation Sans',sans-serif;">5</div>
<div class="t" style="left:163.50px;top:392.56px;font-size:3.0px;color:#666;font-family:'Liberation Sans',sans-serif;">6</div>
<div class="t" style="left:163.50px;top:422.16px;font-size:3.0px;color:#666;font-family:'Liberation Sans',sans-serif;">7</div>
<div class="t" style="left:163.50px;top:451.76px;font-size:3.0px;color:#666;font-family:'Liberation Sans',sans-serif;">8</div>
<div class="t" style="left:163.50px;top:481.36px;font-size:3.0px;color:#666;font-family:'Liberation Sans',sans-serif;">9</div>
<div class="t" style="left:163.50px;top:510.96px;font-size:3.0px;color:#666;font-family:'Liberation Sans',sans-serif;">10</div>
<div class="a" style="left:178.60px;top:250.80px;width:29.60px;height:198.20px;background:#c8cbcb;"></div>
<div class="a" style="left:178.60px;top:216.00px;width:29.60px;height:34.80px;background:#505050;"></div>
<div class="a" style="left:178.60px;top:254.40px;width:29.60px;height:62.80px;background:#f05a5a;"></div>
<div class="a" style="left:178.60px;top:320.00px;width:29.60px;height:39.60px;background:#fdd864;"></div>
<div class="a" style="left:178.60px;top:363.20px;width:29.60px;height:34.40px;background:#23749c;"></div>
<div class="a" style="left:178.60px;top:401.00px;width:29.60px;height:48.00px;background:#72c0ae;"></div>
<div class="a" style="left:208.30px;top:252.15px;width:158.40px;height:1.10px;background:#8e8e8e;"></div>
<div class="a" style="left:208.30px;top:317.85px;width:158.40px;height:1.10px;background:#8e8e8e;"></div>
<div class="a" style="left:208.30px;top:360.75px;width:158.40px;height:1.10px;background:#8e8e8e;"></div>
<div class="a" style="left:208.30px;top:398.85px;width:158.40px;height:1.10px;background:#8e8e8e;"></div>
<div class="a" style="left:208.30px;top:449.85px;width:158.40px;height:1.10px;background:#8e8e8e;"></div>
<div class="t" style="left:212.00px;top:216.09px;font-size:3.2px;color:#333;font-family:'Liberation Sans',sans-serif;transform:scaleX(0.8899);transform-origin:0 0;">First layer</div>
<div class="t" style="left:212.00px;top:254.79px;font-size:3.2px;color:#333;font-family:'Liberation Sans',sans-serif;transform:scaleX(0.8762);transform-origin:0 0;">Red layer</div>
<div class="t" style="left:212.00px;top:320.79px;font-size:3.2px;color:#333;font-family:'Liberation Sans',sans-serif;transform:scaleX(0.8835);transform-origin:0 0;">3rd layer</div>
<div class="t" style="left:212.00px;top:363.29px;font-size:3.2px;color:#333;font-family:'Liberation Sans',sans-serif;transform:scaleX(0.7881);transform-origin:0 0;">Another layer</div>
<div class="t" style="left:212.00px;top:401.29px;font-size:3.2px;color:#333;font-family:'Liberation Sans',sans-serif;transform:scaleX(0.7929);transform-origin:0 0;">Last layer</div>
<div class="t" style="left:269.50px;top:249.06px;font-size:3.0px;color:#333;font-family:'Liberation Sans',sans-serif;transform:scaleX(0.7707);transform-origin:0 0;">1.85</div>
<div class="t" style="left:269.50px;top:314.76px;font-size:3.0px;color:#333;font-family:'Liberation Sans',sans-serif;transform:scaleX(0.7707);transform-origin:0 0;">3.45</div>
<div class="t" style="left:269.50px;top:357.66px;font-size:3.0px;color:#333;font-family:'Liberation Sans',sans-serif;transform:scaleX(0.7707);transform-origin:0 0;">4.20</div>
<div class="t" style="left:269.50px;top:395.76px;font-size:3.0px;color:#333;font-family:'Liberation Sans',sans-serif;transform:scaleX(0.7707);transform-origin:0 0;">5.00</div>
<div class="t" style="left:269.50px;top:446.76px;font-size:3.0px;color:#333;font-family:'Liberation Sans',sans-serif;transform:scaleX(0.7707);transform-origin:0 0;">7.20</div>
<div class="t" style="left:297.00px;top:216.29px;font-size:3.2px;color:#333;font-family:'Liberation Sans',sans-serif;transform:scaleX(0.6332);transform-origin:0 0;">There is no description</div>
<div class="a" style="left:308.10px;top:253.00px;width:1.00px;height:65.40px;background:#333;"></div>
<div class="a" style="left:349.15px;top:253.00px;width:0.70px;height:65.40px;background:#555;"></div>
<div class="t" style="left:305px;top:287px;font-size:3px;line-height:3px;color:#333;writing-mode:vertical-rl;transform:rotate(180deg)">Gel 35</div>
<div class="t" style="left:346px;top:283px;font-size:3px;line-height:3px;color:#333;writing-mode:vertical-rl;transform:rotate(180deg)">Sabbia 40</div>
<div class="t" style="left:296.00px;top:363.38px;font-size:3.1px;color:#333;font-family:'Liberation Sans',sans-serif;transform:scaleX(0.9163);transform-origin:0 0;">Repeat ten times. Repeat ten times. Repeat ten</div>
<div class="t" style="left:296.00px;top:367.68px;font-size:3.1px;color:#333;font-family:'Liberation Sans',sans-serif;transform:scaleX(0.8194);transform-origin:0 0;">times. Repeat ten times. Repeat ten times.</div>
<div class="t" style="left:296.00px;top:371.98px;font-size:3.1px;color:#333;font-family:'Liberation Sans',sans-serif;transform:scaleX(0.9163);transform-origin:0 0;">Repeat ten times. Repeat ten times. Repeat ten</div>
<div class="t" style="left:296.00px;top:376.28px;font-size:3.1px;color:#333;font-family:'Liberation Sans',sans-serif;transform:scaleX(0.8194);transform-origin:0 0;">times. Repeat ten times. Repeat ten times.</div>
<div class="a" style="left:314.85px;top:401.00px;width:0.90px;height:49.40px;background:#3dbb2a;"></div>
<div class="a" style="left:343.15px;top:401.00px;width:0.90px;height:49.40px;background:#d8ec70;"></div>
<div class="t" style="left:311.5px;top:418px;font-size:3px;line-height:3px;color:#3dbb2a;writing-mode:vertical-rl;transform:rotate(180deg)">Ls 35</div>
<div class="t" style="left:339.5px;top:416px;font-size:3px;line-height:3px;color:#c8d850;writing-mode:vertical-rl;transform:rotate(180deg)">Sab 40</div>
<svg class="a" style="left:367px;top:238px;" width="24" height="6" viewBox="0 0 24 6"><line x1="1" y1="3" x2="23" y2="3" stroke="#a8b0ba" stroke-width="0.5" stroke-dasharray="1.2,0.8"/><path d="M2.6 1.4 L0.7 3 L2.6 4.6 M21.4 1.4 L23.3 3 L21.4 4.6" fill="none" stroke="#8a949f" stroke-width="0.6"/></svg>
<div class="t" style="left:377.77px;top:237.16px;font-size:3.0px;color:#333;font-family:'Liberation Sans',sans-serif;">4</div>
<div class="t" style="left:373.43px;top:241.36px;font-size:3.0px;color:#333;font-family:'Liberation Sans',sans-serif;">3.99 Pn</div>
<svg class="a" style="left:367px;top:285px;" width="24" height="6" viewBox="0 0 24 6"><line x1="1" y1="3" x2="23" y2="3" stroke="#a8b0ba" stroke-width="0.5" stroke-dasharray="1.2,0.8"/><path d="M2.6 1.4 L0.7 3 L2.6 4.6 M21.4 1.4 L23.3 3 L21.4 4.6" fill="none" stroke="#8a949f" stroke-width="0.6"/></svg>
<div class="t" style="left:377.77px;top:284.66px;font-size:3.0px;color:#333;font-family:'Liberation Sans',sans-serif;">8</div>
<div class="t" style="left:373.43px;top:288.86px;font-size:3.0px;color:#333;font-family:'Liberation Sans',sans-serif;">3.48 Pn</div>
<svg class="a" style="left:367px;top:340px;" width="24" height="6" viewBox="0 0 24 6"><line x1="1" y1="3" x2="23" y2="3" stroke="#a8b0ba" stroke-width="0.5" stroke-dasharray="1.2,0.8"/><path d="M2.6 1.4 L0.7 3 L2.6 4.6 M21.4 1.4 L23.3 3 L21.4 4.6" fill="none" stroke="#8a949f" stroke-width="0.6"/></svg>
<div class="t" style="left:376.93px;top:340.16px;font-size:3.0px;color:#333;font-family:'Liberation Sans',sans-serif;">17</div>
<div class="t" style="left:373.43px;top:344.36px;font-size:3.0px;color:#333;font-family:'Liberation Sans',sans-serif;">4.08 Pn</div>
<svg class="a" style="left:367px;top:357px;" width="24" height="6" viewBox="0 0 24 6"><line x1="1" y1="3" x2="23" y2="3" stroke="#a8b0ba" stroke-width="0.5" stroke-dasharray="1.2,0.8"/><path d="M2.6 1.4 L0.7 3 L2.6 4.6 M21.4 1.4 L23.3 3 L21.4 4.6" fill="none" stroke="#8a949f" stroke-width="0.6"/></svg>
<div class="t" style="left:376.93px;top:356.66px;font-size:3.0px;color:#333;font-family:'Liberation Sans',sans-serif;">25</div>
<div class="t" style="left:373.43px;top:360.86px;font-size:3.0px;color:#333;font-family:'Liberation Sans',sans-serif;">4.97 Pn</div>
<svg class="a" style="left:390px;top:253px;" width="12" height="6" viewBox="0 0 12 6"><line x1="1" y1="3" x2="11" y2="3" stroke="#a8b0ba" stroke-width="0.5" stroke-dasharray="1.2,0.8"/><path d="M2.6 1.4 L0.7 3 L2.6 4.6 M9.4 1.4 L11.3 3 L9.4 4.6" fill="none" stroke="#8a949f" stroke-width="0.6"/></svg>
<div class="t" style="left:393.22px;top:256.86px;font-size:3.0px;color:#333;font-family:'Liberation Sans',sans-serif;">Nspt</div>
<svg class="a" style="left:414px;top:276px;" width="15" height="6" viewBox="0 0 15 6"><line x1="1" y1="3" x2="14" y2="3" stroke="#a8b0ba" stroke-width="0.5" stroke-dasharray="1.2,0.8"/><path d="M2.6 1.4 L0.7 3 L2.6 4.6 M12.4 1.4 L14.3 3 L12.4 4.6" fill="none" stroke="#8a949f" stroke-width="0.6"/></svg>
<div class="t" style="left:418.18px;top:279.86px;font-size:3.0px;color:#333;font-family:'Liberation Sans',sans-serif;">4.10</div>
<div class="a" style="left:416.90px;top:282.50px;width:8.80px;height:23.80px;background:#5b8fe0;border:0.5px solid #3a6fc0"></div>
<svg class="a" style="left:414px;top:306px;" width="15" height="6" viewBox="0 0 15 6"><line x1="1" y1="3" x2="14" y2="3" stroke="#a8b0ba" stroke-width="0.5" stroke-dasharray="1.2,0.8"/><path d="M2.6 1.4 L0.7 3 L2.6 4.6 M12.4 1.4 L14.3 3 L12.4 4.6" fill="none" stroke="#8a949f" stroke-width="0.6"/></svg>
<div class="a" style="left:404.30px;top:313.70px;width:8.70px;height:5.50px;background:#e8584a;"></div>
<div class="a" style="left:404.30px;top:315.80px;width:8.70px;height:1.20px;background:#b83a30;"></div>
<svg class="a" style="left:414px;top:354px;" width="15" height="6" viewBox="0 0 15 6"><line x1="1" y1="3" x2="14" y2="3" stroke="#a8b0ba" stroke-width="0.5" stroke-dasharray="1.2,0.8"/><path d="M2.6 1.4 L0.7 3 L2.6 4.6 M12.4 1.4 L14.3 3 L12.4 4.6" fill="none" stroke="#8a949f" stroke-width="0.6"/></svg>
<div class="a" style="left:417.00px;top:359.00px;width:8.40px;height:4.00px;background:#6fd78a;"></div>
<svg class="a" style="left:414px;top:363px;" width="15" height="6" viewBox="0 0 15 6"><line x1="1" y1="3" x2="14" y2="3" stroke="#a8b0ba" stroke-width="0.5" stroke-dasharray="1.2,0.8"/><path d="M2.6 1.4 L0.7 3 L2.6 4.6 M12.4 1.4 L14.3 3 L12.4 4.6" fill="none" stroke="#8a949f" stroke-width="0.6"/></svg>
<svg class="a" style="left:414px;top:392px;" width="15" height="6" viewBox="0 0 15 6"><line x1="1" y1="3" x2="14" y2="3" stroke="#a8b0ba" stroke-width="0.5" stroke-dasharray="1.2,0.8"/><path d="M2.6 1.4 L0.7 3 L2.6 4.6 M12.4 1.4 L14.3 3 L12.4 4.6" fill="none" stroke="#8a949f" stroke-width="0.6"/></svg>
<div class="a" style="left:417.00px;top:397.00px;width:8.40px;height:9.00px;background:#f0147a;"></div>
<svg class="a" style="left:414px;top:406px;" width="15" height="6" viewBox="0 0 15 6"><line x1="1" y1="3" x2="14" y2="3" stroke="#a8b0ba" stroke-width="0.5" stroke-dasharray="1.2,0.8"/><path d="M2.6 1.4 L0.7 3 L2.6 4.6 M12.4 1.4 L14.3 3 L12.4 4.6" fill="none" stroke="#8a949f" stroke-width="0.6"/></svg>
<svg class="a" style="left:428px;top:242px;" width="12" height="6" viewBox="0 0 12 6"><line x1="1" y1="3" x2="11" y2="3" stroke="#a8b0ba" stroke-width="0.5" stroke-dasharray="1.2,0.8"/><path d="M2.6 1.4 L0.7 3 L2.6 4.6 M9.4 1.4 L11.3 3 L9.4 4.6" fill="none" stroke="#8a949f" stroke-width="0.6"/></svg>
<div class="t" style="left:432.83px;top:241.66px;font-size:3.0px;color:#333;font-family:'Liberation Sans',sans-serif;">70</div>
<div class="t" style="left:432.41px;top:245.86px;font-size:3.0px;color:#333;font-family:'Liberation Sans',sans-serif;">1.0</div>
<svg class="a" style="left:428px;top:331px;" width="12" height="6" viewBox="0 0 12 6"><line x1="1" y1="3" x2="11" y2="3" stroke="#a8b0ba" stroke-width="0.5" stroke-dasharray="1.2,0.8"/><path d="M2.6 1.4 L0.7 3 L2.6 4.6 M9.4 1.4 L11.3 3 L9.4 4.6" fill="none" stroke="#8a949f" stroke-width="0.6"/></svg>
<div class="t" style="left:432.83px;top:330.66px;font-size:3.0px;color:#333;font-family:'Liberation Sans',sans-serif;">70</div>
<div class="t" style="left:432.41px;top:334.86px;font-size:3.0px;color:#333;font-family:'Liberation Sans',sans-serif;">1.0</div>
<svg class="a" style="left:440px;top:369px;" width="12" height="6" viewBox="0 0 12 6"><line x1="1" y1="3" x2="11" y2="3" stroke="#a8b0ba" stroke-width="0.5" stroke-dasharray="1.2,0.8"/><path d="M2.6 1.4 L0.7 3 L2.6 4.6 M9.4 1.4 L11.3 3 L9.4 4.6" fill="none" stroke="#8a949f" stroke-width="0.6"/></svg>
<div class="t" style="left:444.31px;top:368.66px;font-size:3.0px;color:#333;font-family:'Liberation Sans',sans-serif;">0.5</div>
<div class="t" style="left:443.48px;top:372.86px;font-size:3.0px;color:#333;font-family:'Liberation Sans',sans-serif;">1.50</div>
<svg class="a" style="left:440px;top:436px;" width="12" height="6" viewBox="0 0 12 6"><line x1="1" y1="3" x2="11" y2="3" stroke="#a8b0ba" stroke-width="0.5" stroke-dasharray="1.2,0.8"/><path d="M2.6 1.4 L0.7 3 L2.6 4.6 M9.4 1.4 L11.3 3 L9.4 4.6" fill="none" stroke="#8a949f" stroke-width="0.6"/></svg>
<div class="t" style="left:444.31px;top:435.66px;font-size:3.0px;color:#333;font-family:'Liberation Sans',sans-serif;">0.5</div>
<div class="t" style="left:443.48px;top:439.86px;font-size:3.0px;color:#333;font-family:'Liberation Sans',sans-serif;">1.50</div>
<svg class="a" style="left:453px;top:259px;" width="10" height="10" viewBox="0 0 10 10"><circle cx="5" cy="5" r="4" fill="#5a5048" stroke="#333" stroke-width="0.5"/><circle cx="4" cy="4" r="1.2" fill="#8a8078"/></svg>
<div class="t" style="left:455.38px;top:249.76px;font-size:3px;color:#333;font-family:'Liberation Sans',sans-serif;">(No)</div>
<div class="t" style="left:455.85px;top:272.46px;font-size:3px;color:#333;font-family:'Liberation Sans',sans-serif;">Yes</div>
<svg class="a" style="left:453px;top:346px;" width="10" height="10" viewBox="0 0 10 10"><circle cx="5" cy="5" r="4" fill="#e8c07a" stroke="#b0905a" stroke-width="0.5"/><circle cx="4" cy="4" r="1.3" fill="#fff3d8"/><circle cx="6.2" cy="6" r="1" fill="#a07a40"/></svg>
<div class="t" style="left:456.30px;top:337.46px;font-size:3px;color:#333;font-family:'Liberation Sans',sans-serif;">PE</div>
<div class="t" style="left:456.47px;top:361.46px;font-size:3px;color:#333;font-family:'Liberation Sans',sans-serif;">1E</div>
<div class="a" style="left:465.00px;top:300.00px;width:17.00px;height:5.60px;background:#fff;border:0.6px solid #999"></div>
<div class="a" style="left:465.00px;top:368.70px;width:17.00px;height:4.60px;background:#fff;border:0.6px solid #999"></div>
<svg class="a" style="left:482px;top:258px;" width="12" height="6" viewBox="0 0 12 6"><line x1="1" y1="3" x2="11" y2="3" stroke="#a8b0ba" stroke-width="0.5" stroke-dasharray="1.2,0.8"/><path d="M2.6 1.4 L0.7 3 L2.6 4.6 M9.4 1.4 L11.3 3 L9.4 4.6" fill="none" stroke="#8a949f" stroke-width="0.6"/></svg>
<div class="t" style="left:485.48px;top:261.86px;font-size:3.0px;color:#333;font-family:'Liberation Sans',sans-serif;">1.85</div>
<svg class="a" style="left:482px;top:315px;" width="12" height="6" viewBox="0 0 12 6"><line x1="1" y1="3" x2="11" y2="3" stroke="#a8b0ba" stroke-width="0.5" stroke-dasharray="1.2,0.8"/><path d="M2.6 1.4 L0.7 3 L2.6 4.6 M9.4 1.4 L11.3 3 L9.4 4.6" fill="none" stroke="#8a949f" stroke-width="0.6"/></svg>
<div class="t" style="left:485.48px;top:318.86px;font-size:3.0px;color:#333;font-family:'Liberation Sans',sans-serif;">3.45</div>
<svg class="a" style="left:482px;top:391px;" width="12" height="6" viewBox="0 0 12 6"><line x1="1" y1="3" x2="11" y2="3" stroke="#a8b0ba" stroke-width="0.5" stroke-dasharray="1.2,0.8"/><path d="M2.6 1.4 L0.7 3 L2.6 4.6 M9.4 1.4 L11.3 3 L9.4 4.6" fill="none" stroke="#8a949f" stroke-width="0.6"/></svg>
<div class="t" style="left:485.48px;top:394.86px;font-size:3.0px;color:#333;font-family:'Liberation Sans',sans-serif;">5.00</div>
<div class="a" style="left:503.20px;top:214.50px;width:71.40px;height:38.10px;background:#868a8f;border:0.7px solid #444"></div>
<div class="a" style="left:495.50px;top:252.60px;width:20.90px;height:64.70px;background:#f5c24e;"></div>
<div class="a" style="left:561.00px;top:252.60px;width:22.40px;height:64.70px;background:#f5c24e;"></div>
<svg class="a" style="left:495px;top:252px;" width="89" height="66" viewBox="0 0 89 66"><path d="M4 6 q1 -1.6 2 0 q1 1.6 2 0" fill="none" stroke="#8a6a2a" stroke-width="0.45"/><path d="M12 6 q1 -1.6 2 0 q1 1.6 2 0" fill="none" stroke="#8a6a2a" stroke-width="0.45"/><path d="M70 6 q1 -1.6 2 0 q1 1.6 2 0" fill="none" stroke="#8a6a2a" stroke-width="0.45"/><path d="M79 6 q1 -1.6 2 0 q1 1.6 2 0" fill="none" stroke="#8a6a2a" stroke-width="0.45"/><path d="M4 23 q1 -1.6 2 0 q1 1.6 2 0" fill="none" stroke="#8a6a2a" stroke-width="0.45"/><path d="M12 23 q1 -1.6 2 0 q1 1.6 2 0" fill="none" stroke="#8a6a2a" stroke-width="0.45"/><path d="M70 23 q1 -1.6 2 0 q1 1.6 2 0" fill="none" stroke="#8a6a2a" stroke-width="0.45"/><path d="M79 23 q1 -1.6 2 0 q1 1.6 2 0" fill="none" stroke="#8a6a2a" stroke-width="0.45"/><path d="M4 40 q1 -1.6 2 0 q1 1.6 2 0" fill="none" stroke="#8a6a2a" stroke-width="0.45"/><path d="M12 40 q1 -1.6 2 0 q1 1.6 2 0" fill="none" stroke="#8a6a2a" stroke-width="0.45"/><path d="M70 40 q1 -1.6 2 0 q1 1.6 2 0" fill="none" stroke="#8a6a2a" stroke-width="0.45"/><path d="M79 40 q1 -1.6 2 0 q1 1.6 2 0" fill="none" stroke="#8a6a2a" stroke-width="0.45"/><path d="M4 57 q1 -1.6 2 0 q1 1.6 2 0" fill="none" stroke="#8a6a2a" stroke-width="0.45"/><path d="M12 57 q1 -1.6 2 0 q1 1.6 2 0" fill="none" stroke="#8a6a2a" stroke-width="0.45"/><path d="M70 57 q1 -1.6 2 0 q1 1.6 2 0" fill="none" stroke="#8a6a2a" stroke-width="0.45"/><path d="M79 57 q1 -1.6 2 0 q1 1.6 2 0" fill="none" stroke="#8a6a2a" stroke-width="0.45"/><rect x="5" y="13" width="0.6" height="0.6" fill="#8a6a2a"/><rect x="14" y="13" width="0.6" height="0.6" fill="#8a6a2a"/><rect x="71" y="13" width="0.6" height="0.6" fill="#8a6a2a"/><rect x="80" y="13" width="0.6" height="0.6" fill="#8a6a2a"/><rect x="5" y="30" width="0.6" height="0.6" fill="#8a6a2a"/><rect x="14" y="30" width="0.6" height="0.6" fill="#8a6a2a"/><rect x="71" y="30" width="0.6" height="0.6" fill="#8a6a2a"/><rect x="80" y="30" width="0.6" height="0.6" fill="#8a6a2a"/><rect x="5" y="47" width="0.6" height="0.6" fill="#8a6a2a"/><rect x="14" y="47" width="0.6" height="0.6" fill="#8a6a2a"/><rect x="71" y="47" width="0.6" height="0.6" fill="#8a6a2a"/><rect x="80" y="47" width="0.6" height="0.6" fill="#8a6a2a"/><rect x="5" y="62" width="0.6" height="0.6" fill="#8a6a2a"/><rect x="14" y="62" width="0.6" height="0.6" fill="#8a6a2a"/><rect x="71" y="62" width="0.6" height="0.6" fill="#8a6a2a"/><rect x="80" y="62" width="0.6" height="0.6" fill="#8a6a2a"/></svg>
<div class="a" style="left:516.40px;top:252.60px;width:44.60px;height:66.20px;background:#c0c0c0;border:0.7px solid #444"></div>
<svg class="a" style="left:534px;top:309.6px;" width="10" height="86" viewBox="0 0 10 86"><rect x="0.3" y="0.3" width="9.4" height="85.4" fill="#5c5c5c" stroke="#333" stroke-width="0.6"/><line x1="0" y1="1.50" x2="10" y2="1.50" stroke="#8a8a8a" stroke-width="0.45"/><line x1="0" y1="3.30" x2="10" y2="3.30" stroke="#8a8a8a" stroke-width="0.45"/><line x1="0" y1="5.10" x2="10" y2="5.10" stroke="#8a8a8a" stroke-width="0.45"/><line x1="0" y1="6.90" x2="10" y2="6.90" stroke="#8a8a8a" stroke-width="0.45"/><line x1="0" y1="8.70" x2="10" y2="8.70" stroke="#8a8a8a" stroke-width="0.45"/><line x1="0" y1="10.50" x2="10" y2="10.50" stroke="#8a8a8a" stroke-width="0.45"/><line x1="0" y1="12.30" x2="10" y2="12.30" stroke="#8a8a8a" stroke-width="0.45"/><line x1="0" y1="14.10" x2="10" y2="14.10" stroke="#8a8a8a" stroke-width="0.45"/><line x1="0" y1="15.90" x2="10" y2="15.90" stroke="#8a8a8a" stroke-width="0.45"/><line x1="0" y1="17.70" x2="10" y2="17.70" stroke="#8a8a8a" stroke-width="0.45"/><line x1="0" y1="19.50" x2="10" y2="19.50" stroke="#8a8a8a" stroke-width="0.45"/><line x1="0" y1="21.30" x2="10" y2="21.30" stroke="#8a8a8a" stroke-width="0.45"/><line x1="0" y1="23.10" x2="10" y2="23.10" stroke="#8a8a8a" stroke-width="0.45"/><line x1="0" y1="24.90" x2="10" y2="24.90" stroke="#8a8a8a" stroke-width="0.45"/><line x1="0" y1="26.70" x2="10" y2="26.70" stroke="#8a8a8a" stroke-width="0.45"/><line x1="0" y1="28.50" x2="10" y2="28.50" stroke="#8a8a8a" stroke-width="0.45"/><line x1="0" y1="30.30" x2="10" y2="30.30" stroke="#8a8a8a" stroke-width="0.45"/><line x1="0" y1="32.10" x2="10" y2="32.10" stroke="#8a8a8a" stroke-width="0.45"/><line x1="0" y1="33.90" x2="10" y2="33.90" stroke="#8a8a8a" stroke-width="0.45"/><line x1="0" y1="35.70" x2="10" y2="35.70" stroke="#8a8a8a" stroke-width="0.45"/><line x1="0" y1="37.50" x2="10" y2="37.50" stroke="#8a8a8a" stroke-width="0.45"/><line x1="0" y1="39.30" x2="10" y2="39.30" stroke="#8a8a8a" stroke-width="0.45"/><line x1="0" y1="41.10" x2="10" y2="41.10" stroke="#8a8a8a" stroke-width="0.45"/><line x1="0" y1="42.90" x2="10" y2="42.90" stroke="#8a8a8a" stroke-width="0.45"/><line x1="0" y1="44.70" x2="10" y2="44.70" stroke="#8a8a8a" stroke-width="0.45"/><line x1="0" y1="46.50" x2="10" y2="46.50" stroke="#8a8a8a" stroke-width="0.45"/><line x1="0" y1="48.30" x2="10" y2="48.30" stroke="#8a8a8a" stroke-width="0.45"/><line x1="0" y1="50.10" x2="10" y2="50.10" stroke="#8a8a8a" stroke-width="0.45"/><line x1="0" y1="51.90" x2="10" y2="51.90" stroke="#8a8a8a" stroke-width="0.45"/><line x1="0" y1="53.70" x2="10" y2="53.70" stroke="#8a8a8a" stroke-width="0.45"/><line x1="0" y1="55.50" x2="10" y2="55.50" stroke="#8a8a8a" stroke-width="0.45"/><line x1="0" y1="57.30" x2="10" y2="57.30" stroke="#8a8a8a" stroke-width="0.45"/><line x1="0" y1="59.10" x2="10" y2="59.10" stroke="#8a8a8a" stroke-width="0.45"/><line x1="0" y1="60.90" x2="10" y2="60.90" stroke="#8a8a8a" stroke-width="0.45"/><line x1="0" y1="62.70" x2="10" y2="62.70" stroke="#8a8a8a" stroke-width="0.45"/><line x1="0" y1="64.50" x2="10" y2="64.50" stroke="#8a8a8a" stroke-width="0.45"/><line x1="0" y1="66.30" x2="10" y2="66.30" stroke="#8a8a8a" stroke-width="0.45"/><line x1="0" y1="68.10" x2="10" y2="68.10" stroke="#8a8a8a" stroke-width="0.45"/><line x1="0" y1="69.90" x2="10" y2="69.90" stroke="#8a8a8a" stroke-width="0.45"/><line x1="0" y1="71.70" x2="10" y2="71.70" stroke="#8a8a8a" stroke-width="0.45"/><line x1="0" y1="73.50" x2="10" y2="73.50" stroke="#8a8a8a" stroke-width="0.45"/><line x1="0" y1="75.30" x2="10" y2="75.30" stroke="#8a8a8a" stroke-width="0.45"/><line x1="0" y1="77.10" x2="10" y2="77.10" stroke="#8a8a8a" stroke-width="0.45"/><line x1="0" y1="78.90" x2="10" y2="78.90" stroke="#8a8a8a" stroke-width="0.45"/><line x1="0" y1="80.70" x2="10" y2="80.70" stroke="#8a8a8a" stroke-width="0.45"/><line x1="0" y1="82.50" x2="10" y2="82.50" stroke="#8a8a8a" stroke-width="0.45"/><line x1="0" y1="84.30" x2="10" y2="84.30" stroke="#8a8a8a" stroke-width="0.45"/><line x1="2.5" y1="0" x2="2.5" y2="86" stroke="#8a8a8a" stroke-width="0.45"/><line x1="5" y1="0" x2="5" y2="86" stroke="#8a8a8a" stroke-width="0.45"/><line x1="7.5" y1="0" x2="7.5" y2="86" stroke="#8a8a8a" stroke-width="0.45"/></svg>
<div class="t" style="left:587.00px;top:216.29px;font-size:3.2px;color:#333;font-family:'Liberation Sans',sans-serif;transform:scaleX(0.9546);transform-origin:0 0;">Note 1</div>
<div class="t" style="left:587.00px;top:253.79px;font-size:3.2px;color:#333;font-family:'Liberation Sans',sans-serif;transform:scaleX(0.8185);transform-origin:0 0;">Another note</div>
<div class="t" style="left:587.00px;top:319.79px;font-size:3.2px;color:#333;font-family:'Liberation Sans',sans-serif;transform:scaleX(0.9258);transform-origin:0 0;">A Another description</div>
<div class="t" style="left:625.50px;top:280.96px;font-size:3px;color:#333;font-family:'Liberation Sans',sans-serif;transform:scaleX(0.9419);transform-origin:0 0;">2.45</div>
<svg class="a" style="left:628px;top:286px;" width="12" height="11" viewBox="0 0 12 11"><line x1="0" y1="1" x2="11" y2="1" stroke="#5a6ae0" stroke-width="0.8"/><line x1="4" y1="3" x2="7" y2="3" stroke="#5a6ae0" stroke-width="0.6"/><line x1="3.5" y1="6" x2="8" y2="6" stroke="#5a6ae0" stroke-width="0.6"/><line x1="2.5" y1="8" x2="9" y2="8" stroke="#5a6ae0" stroke-width="0.8"/><line x1="3.5" y1="10" x2="8" y2="10" stroke="#5a6ae0" stroke-width="0.6"/><line x1="5.5" y1="1" x2="5.5" y2="10" stroke="#5a6ae0" stroke-width="0.4"/></svg>
<div class="t" style="left:641.00px;top:332.46px;font-size:3px;color:#333;font-family:'Liberation Sans',sans-serif;transform:scaleX(0.9087);transform-origin:0 0;">Two</div>
<svg class="a" style="left:640px;top:339px;" width="12" height="6" viewBox="0 0 12 6"><line x1="1" y1="3" x2="11" y2="3" stroke="#a8b0ba" stroke-width="0.5" stroke-dasharray="1.2,0.8"/><path d="M2.6 1.4 L0.7 3 L2.6 4.6 M9.4 1.4 L11.3 3 L9.4 4.6" fill="none" stroke="#8a949f" stroke-width="0.6"/></svg>
<div class="t" style="left:643.81px;top:342.86px;font-size:3.0px;color:#333;font-family:'Liberation Sans',sans-serif;">1.0</div>
<div class="a" style="left:639.00px;top:377.00px;width:12.00px;height:8.00px;background:#e6e6ea;border:0.6px solid #ccc"></div>
<svg class="a" style="left:641px;top:378px;" width="8" height="6" viewBox="0 0 8 6"><path d="M0.5 5.5 L3 2.5 L5 4.5 L6 3.5 L7.5 5.5 Z" fill="#aab"/><circle cx="6" cy="1.6" r="0.8" fill="#aab"/></svg>
<svg class="a" style="left:684px;top:214px;" width="72" height="300" viewBox="0 0 72 300"><rect x="0.5" y="0.90" width="68.00" height="29.72" fill="#aee08f" stroke="#444" stroke-width="0.8"/><rect x="0.5" y="30.62" width="29.00" height="29.72" fill="#aee08f" stroke="#444" stroke-width="0.8"/><rect x="0.5" y="60.34" width="48.90" height="29.72" fill="#aee08f" stroke="#444" stroke-width="0.8"/><rect x="0.5" y="90.06" width="19.60" height="29.72" fill="#aee08f" stroke="#444" stroke-width="0.8"/><rect x="0.5" y="119.78" width="29.00" height="29.72" fill="#aee08f" stroke="#444" stroke-width="0.8"/><rect x="0.5" y="149.50" width="48.90" height="29.72" fill="#aee08f" stroke="#444" stroke-width="0.8"/><rect x="0.5" y="179.22" width="58.90" height="29.72" fill="#aee08f" stroke="#444" stroke-width="0.8"/><rect x="0.5" y="208.94" width="38.70" height="29.72" fill="#aee08f" stroke="#444" stroke-width="0.8"/><rect x="0.5" y="238.66" width="19.50" height="29.72" fill="#aee08f" stroke="#444" stroke-width="0.8"/><rect x="0.5" y="268.38" width="9.50" height="29.72" fill="#aee08f" stroke="#444" stroke-width="0.8"/><line x1="0.6" y1="30" x2="0.6" y2="297.6" stroke="#3fdc3f" stroke-width="1"/></svg>
<svg class="a" style="left:756px;top:214px;" width="75" height="300" viewBox="0 0 75 300"><line x1="3" y1="30.30000000000001" x2="3" y2="297.6" stroke="#66ee66" stroke-width="1"/><line x1="3" y1="30.12" x2="71.00" y2="30.12" stroke="#555" stroke-width="0.6" stroke-dasharray="1,0.8"/><line x1="3" y1="59.84" x2="32.00" y2="59.84" stroke="#555" stroke-width="0.6" stroke-dasharray="1,0.8"/><line x1="3" y1="89.56" x2="51.90" y2="89.56" stroke="#555" stroke-width="0.6" stroke-dasharray="1,0.8"/><line x1="3" y1="119.28" x2="22.60" y2="119.28" stroke="#555" stroke-width="0.6" stroke-dasharray="1,0.8"/><line x1="3" y1="149.00" x2="32.00" y2="149.00" stroke="#555" stroke-width="0.6" stroke-dasharray="1,0.8"/><line x1="3" y1="178.72" x2="51.90" y2="178.72" stroke="#555" stroke-width="0.6" stroke-dasharray="1,0.8"/><line x1="3" y1="208.44" x2="61.90" y2="208.44" stroke="#555" stroke-width="0.6" stroke-dasharray="1,0.8"/><line x1="3" y1="238.16" x2="41.70" y2="238.16" stroke="#555" stroke-width="0.6" stroke-dasharray="1,0.8"/><line x1="3" y1="267.88" x2="22.50" y2="267.88" stroke="#555" stroke-width="0.6" stroke-dasharray="1,0.8"/><line x1="3" y1="297.60" x2="12.50" y2="297.60" stroke="#555" stroke-width="0.6" stroke-dasharray="1,0.8"/><polyline points="71.00,30.12 32.00,59.84 51.90,89.56 22.60,119.28 32.00,149.00 51.90,178.72 61.90,208.44 41.70,238.16 22.50,267.88 12.50,297.60" fill="none" stroke="#333" stroke-width="0.7"/><line x1="3" y1="297.6" x2="12.700000000000045" y2="297.6" stroke="#333" stroke-width="0.7"/></svg>
<div class="a" style="left:849.00px;top:214.50px;width:11.00px;height:63.20px;background:#bdbdbd;border:0.7px solid #555"></div>
<div class="a" style="left:849.00px;top:277.70px;width:11.00px;height:44.90px;background:#fff;border:0.7px solid #555"></div>
<svg class="a" style="left:850px;top:300px;" width="9" height="22" viewBox="0 0 9 22"><line x1="1.5" y1="0" x2="1.5" y2="22" stroke="#777" stroke-width="0.5" stroke-dasharray="1.4,1"/><line x1="7.5" y1="0" x2="7.5" y2="22" stroke="#777" stroke-width="0.5" stroke-dasharray="1.4,1"/><line x1="1.5" y1="6" x2="7.5" y2="6" stroke="#777" stroke-width="0.4"/><line x1="1.5" y1="13" x2="7.5" y2="13" stroke="#777" stroke-width="0.4"/></svg>
<div class="t" style="left:851.58px;top:328.76px;font-size:3px;color:#333;font-family:'Liberation Sans',sans-serif;">1.50</div>
<div class="a" style="left:897.40px;top:214.50px;width:11.20px;height:88.50px;background:#bdbdbd;border:0.7px solid #555"></div>
<svg class="a" style="left:898px;top:258px;" width="10" height="45" viewBox="0 0 10 45"><rect x="1" y="0.5" width="8" height="43" rx="1.5" fill="#dfe8ee" stroke="#b04a30" stroke-width="0.7"/><rect x="2" y="1.5" width="6" height="4" fill="#3a7ac8" stroke="#b04a30" stroke-width="0.5"/><rect x="3" y="6" width="3" height="34" fill="#fff" opacity="0.7"/><path d="M1.5 38 L5 43 L8.5 38 Z" fill="#b04a30"/></svg>
<div class="t" style="left:900.08px;top:309.76px;font-size:3px;color:#333;font-family:'Liberation Sans',sans-serif;">2.00</div>
<div class="a" style="left:946.40px;top:214.50px;width:11.20px;height:168.50px;background:#bdbdbd;border:0.7px solid #555"></div>
<div class="a" style="left:946.40px;top:382.80px;width:11.60px;height:44.90px;background:#fff;border:0.7px solid #777"></div>
<svg class="a" style="left:946px;top:382px;" width="12" height="47" viewBox="0 0 12 47"><rect x="4.5" y="1" width="3" height="14" fill="#a88a5a"/><rect x="5.2" y="1" width="1.2" height="14" fill="#e0d0a8"/><rect x="2.5" y="15" width="7" height="4" fill="#7a6a4a"/><rect x="2.5" y="18" width="7" height="1" fill="#222"/><rect x="3" y="19" width="6" height="5" fill="#9a8a6a"/><rect x="2.5" y="24" width="7" height="11" fill="#d89a30"/><rect x="4" y="25" width="2" height="9" fill="#f0c060"/><path d="M2.5 35 H9.5 V39 L6 45 L2.5 39 Z" fill="#a08a60"/><rect x="4" y="36" width="1.5" height="4" fill="#e8dcc0"/></svg>
<div class="t" style="left:948.58px;top:431.46px;font-size:3px;color:#333;font-family:'Liberation Sans',sans-serif;">7.50</div>
<div class="a" style="left:0.00px;top:539.60px;width:1024.00px;height:6.40px;background:#1b4584;"></div>
<div class="t" style="left:8.20px;top:543.64px;font-size:6.8px;color:#fff;font-family:'Liberation Sans',sans-serif;transform:scaleX(0.8193);transform-origin:0 0;">mm: x(47.00) y(16.86)</div>
<div class="t" style="left:76.00px;top:543.64px;font-size:6.8px;color:#fff;font-family:'Liberation Sans',sans-serif;transform:scaleX(0.7984);transform-origin:0 0;">ELEVATION: 0.00 MT</div>
<div class="a" style="left:133.40px;top:539.60px;width:164.60px;height:6.40px;background:#fff;"></div>
<div class="t" style="left:136.00px;top:543.64px;font-size:6.8px;color:#111;font-family:'Liberation Sans',sans-serif;transform:scaleX(0.8778);transform-origin:0 0;">This bar can be used as shortcut to some commands:</div>
<div class="a" style="left:298.00px;top:539.60px;width:58.00px;height:6.40px;background:#234f93;"></div>
<svg class="a" style="left:302px;top:542px;" width="6" height="4" viewBox="0 0 6 4"><path d="M0.3 2 L2 0.8 V3.2 Z M5.7 2 L4 0.8 V3.2 Z" fill="#cfd8e8"/><line x1="1.5" y1="2" x2="4.5" y2="2" stroke="#cfd8e8" stroke-width="0.5"/></svg>
<div class="t" style="left:309.75px;top:543.64px;font-size:6.8px;color:#fff;font-family:'Liberation Sans',sans-serif;transform:scaleX(0.7735);transform-origin:0 0;">SCALE</div>
<svg class="a" style="left:329.5px;top:541px;" width="8" height="5" viewBox="0 0 8 5"><rect x="0" y="0" width="7.5" height="5" fill="#fff"/><line x1="1.9" y1="0" x2="1.9" y2="5" stroke="#234f93" stroke-width="0.6"/><line x1="3.8" y1="0" x2="3.8" y2="5" stroke="#234f93" stroke-width="0.6"/><line x1="5.6" y1="0" x2="5.6" y2="5" stroke="#234f93" stroke-width="0.6"/><line x1="0" y1="2" x2="7.5" y2="2" stroke="#234f93" stroke-width="0.5"/></svg>
<div class="t" style="left:340.50px;top:543.64px;font-size:6.8px;color:#fff;font-family:'Liberation Sans',sans-serif;transform:scaleX(0.7941);transform-origin:0 0;">GRID</div>
<div class="a" style="left:356.00px;top:539.60px;width:47.00px;height:6.40px;background:#173a72;"></div>
<div class="a" style="left:360.50px;top:543.00px;width:4.00px;height:3.00px;background:#fff;"></div>
<div class="t" style="left:367.00px;top:543.64px;font-size:6.8px;color:#fff;font-family:'Liberation Sans',sans-serif;transform:scaleX(0.7893);transform-origin:0 0;">GUIDE LINES</div>
<div class="t" style="left:407.00px;top:543.64px;font-size:6.8px;color:#fff;font-family:'Liberation Sans',sans-serif;transform:scaleX(0.8082);transform-origin:0 0;">STRATIGRAPHER 2021.24.1.904 ≡ GTNJZPT@GMAIL.COM</div>
<svg class="a" style="left:564px;top:542px;" width="6" height="5" viewBox="0 0 6 5"><circle cx="3" cy="3" r="2.4" fill="#dde4ef"/><circle cx="3" cy="3" r="1" fill="#1b4584"/></svg>
<div class="t" style="left:571.00px;top:543.64px;font-size:6.8px;color:#fff;font-family:'Liberation Sans',sans-serif;transform:scaleX(0.8469);transform-origin:0 0;">EN</div>
<div class="a" style="left:938.70px;top:543.60px;width:4.00px;height:2.40px;background:#f4f4f4;"></div>
<div class="t" style="left:946.60px;top:543.64px;font-size:6.8px;color:#fff;font-family:'Liberation Sans',sans-serif;transform:scaleX(0.9006);transform-origin:0 0;">Page width</div>
<div class="a" style="left:978.70px;top:539.60px;width:45.30px;height:6.40px;background:#3f6fb5;"></div>
<div class="a" style="left:983.50px;top:543.60px;width:3.50px;height:2.40px;background:#f4f4f4;"></div>
<div class="t" style="left:990.80px;top:543.64px;font-size:6.8px;color:#fff;font-family:'Liberation Sans',sans-serif;transform:scaleX(0.9699);transform-origin:0 0;">Whole page</div></div></body></html>
